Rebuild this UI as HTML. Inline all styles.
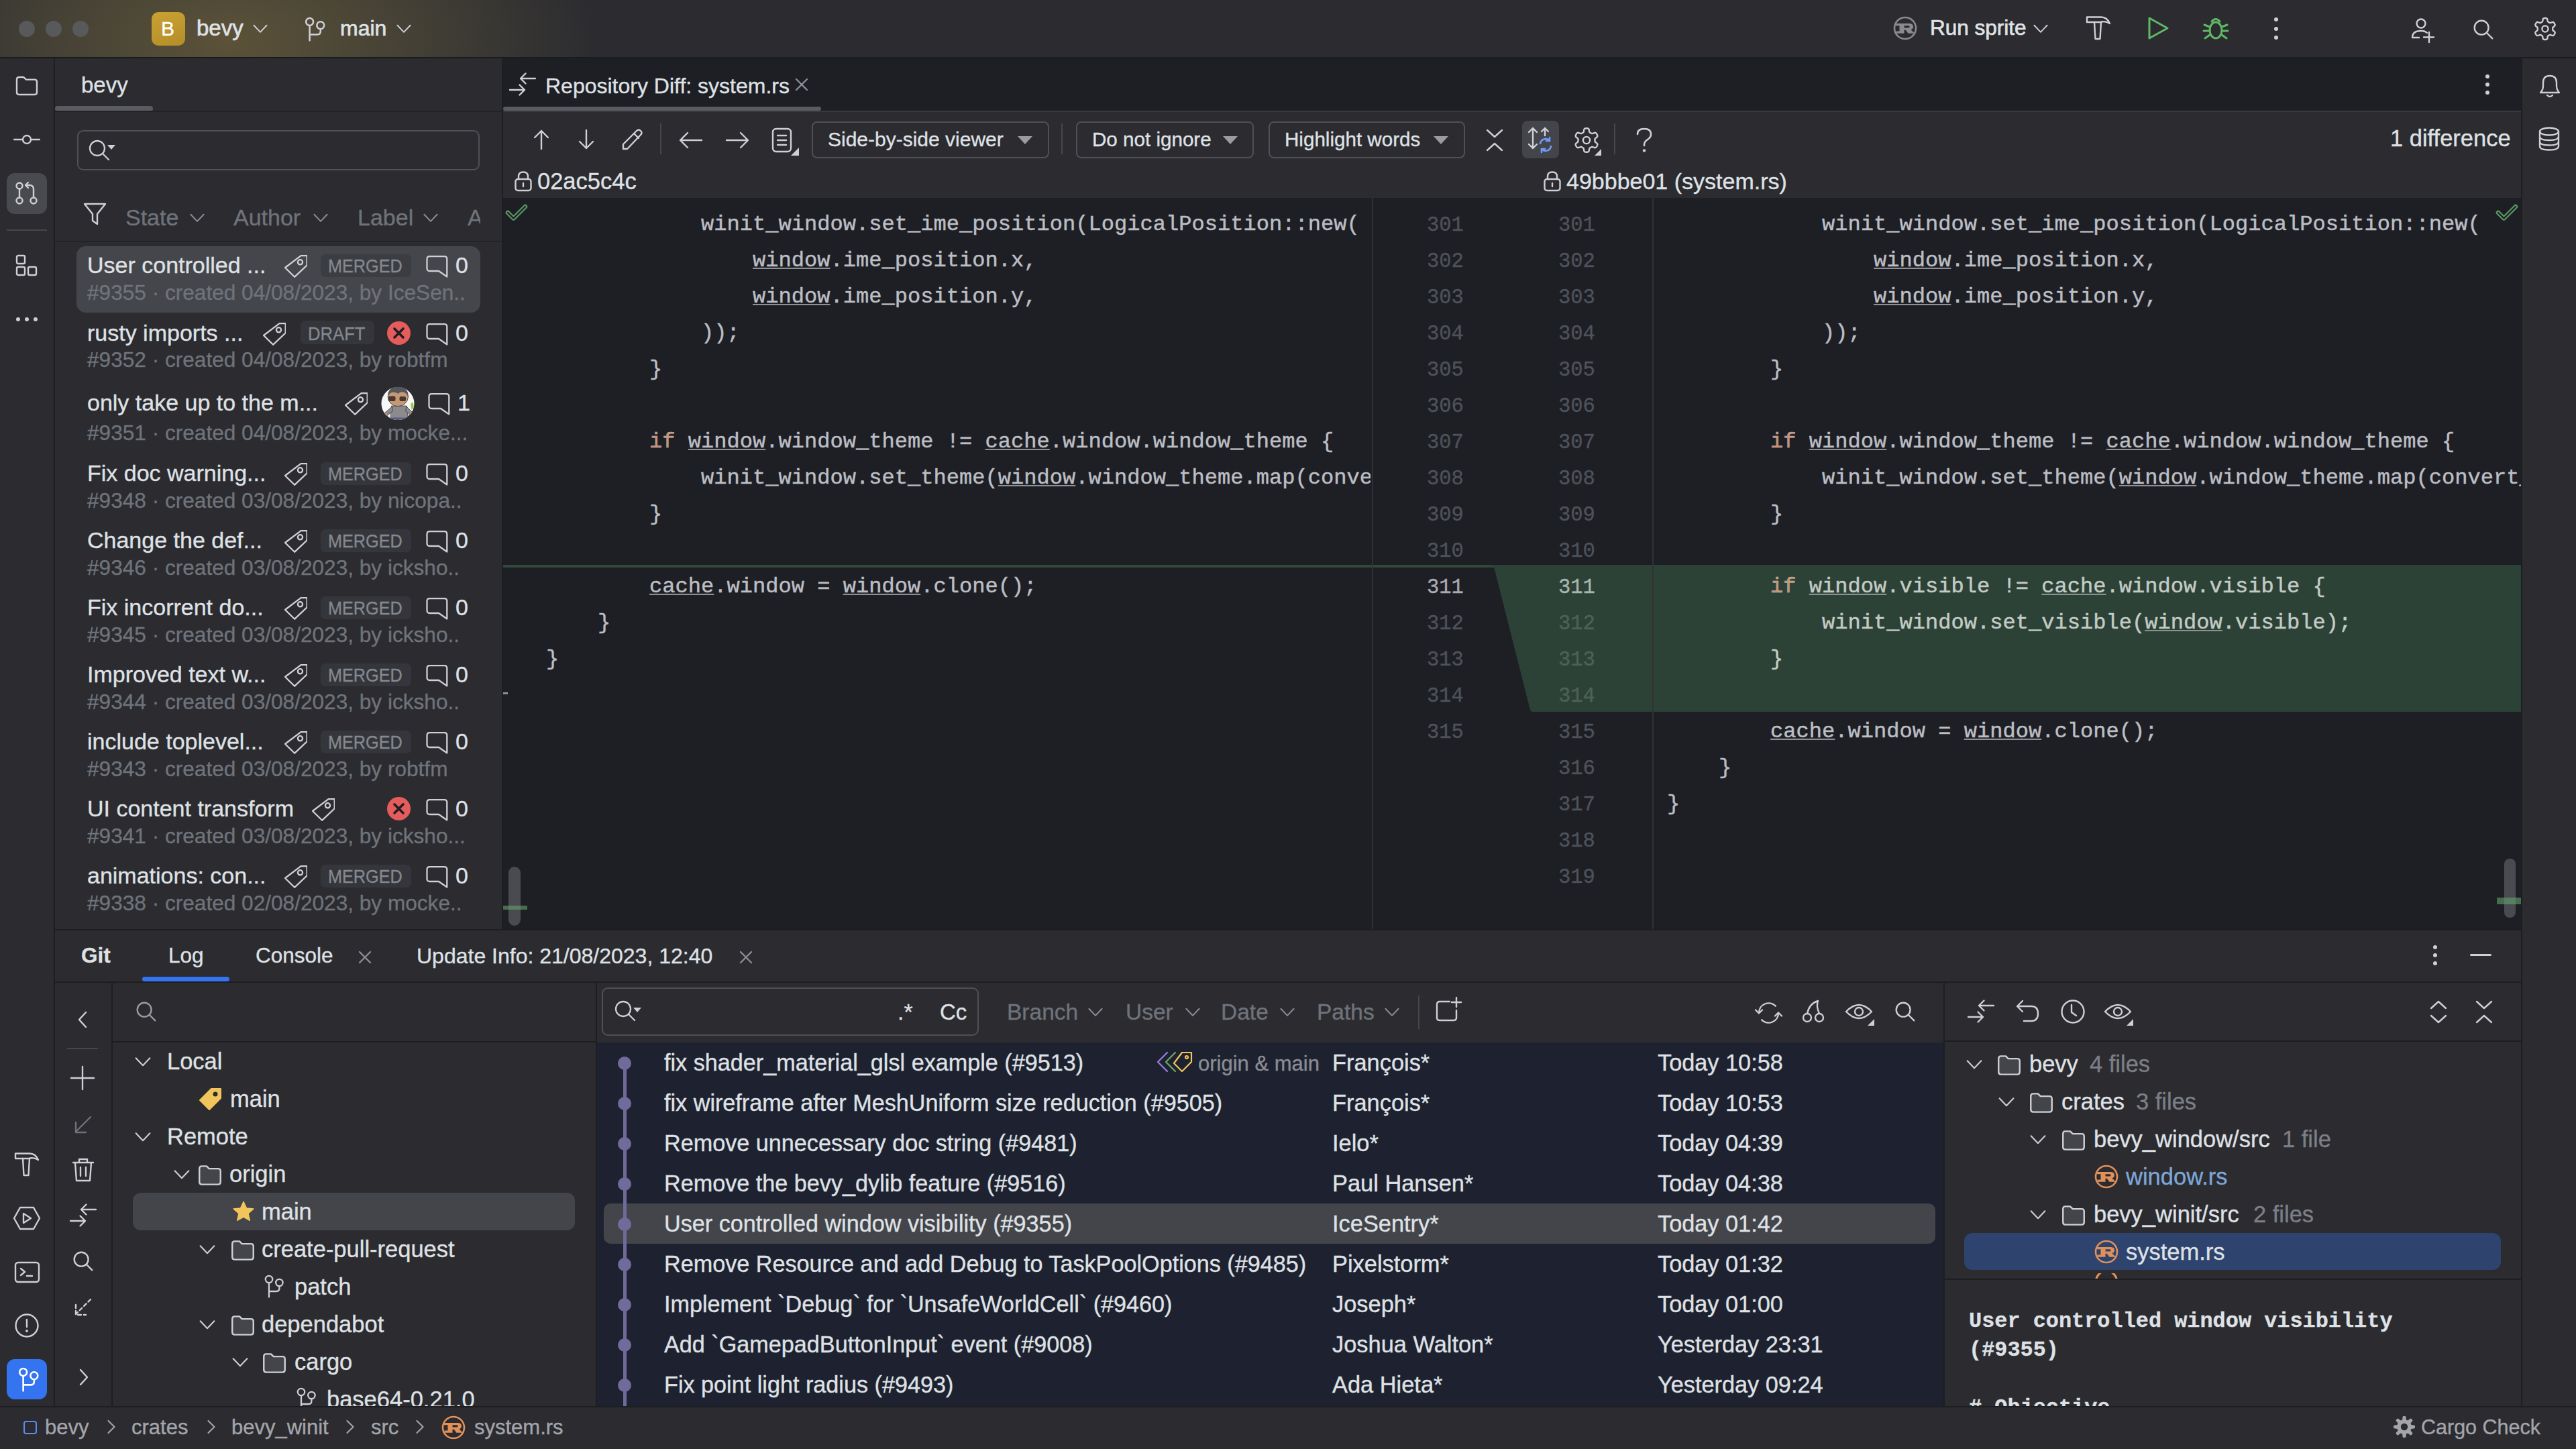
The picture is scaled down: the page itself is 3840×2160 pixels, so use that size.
<!DOCTYPE html><html><head><meta charset="utf-8"><title>RustRover</title>
<style>
html,body{margin:0;padding:0;}
body{width:3840px;height:2160px;overflow:hidden;background:#2b2b30;position:relative;font-family:"Liberation Sans",sans-serif;}
.t{position:absolute;white-space:pre;line-height:1;-webkit-text-stroke-width:0.35px;}
u{text-decoration:underline;text-underline-offset:2px;text-decoration-thickness:2px;text-decoration-color:#8e9096;}
</style>
</head><body>
<div style="position:absolute;left:0px;top:0px;width:3840px;height:86px;background:#2b2b30;border-radius:0px;"></div>
<div style="position:absolute;left:0;top:0;width:3840px;height:86px;background:radial-gradient(ellipse 560px 290px at 340px 60px, rgba(126,110,62,0.58) 0%, rgba(110,100,62,0.38) 48%, rgba(43,43,48,0) 100%);"></div>
<div style="position:absolute;left:0px;top:85px;width:3840px;height:2px;background:#1b1c1f;border-radius:0px;"></div>
<div style="position:absolute;left:28px;top:31px;width:24px;height:24px;background:#58595b;border-radius:12px;"></div>
<div style="position:absolute;left:68px;top:31px;width:24px;height:24px;background:#58595b;border-radius:12px;"></div>
<div style="position:absolute;left:108px;top:31px;width:24px;height:24px;background:#58595b;border-radius:12px;"></div>
<div style="position:absolute;left:226px;top:18px;width:50px;height:50px;background:linear-gradient(160deg,#c9a233,#b58d2a);border-radius:10px;"></div>
<div class="t" style="left:240px;top:27.61px;font-size:30px;color:#ffffff;font-weight:400;font-family:'Liberation Sans', sans-serif;">B</div>
<div class="t" style="left:293px;top:25.07px;font-size:33px;color:#dfe1e5;font-weight:400;font-family:'Liberation Sans', sans-serif;-webkit-text-stroke:0.7px #dfe1e5">bevy</div>
<svg style="position:absolute;left:376px;top:31px;" width="24" height="24" viewBox="0 0 20 20" fill="none" stroke-linecap="round" stroke-linejoin="round"><g stroke="#ced0d6" stroke-width="1.6"><path d="M2 5.6 L10 14 L18 5.6"/></g></svg>
<svg style="position:absolute;left:452px;top:22px;" width="36" height="42" viewBox="-1 -2 34 40" fill="none" stroke-linecap="round" stroke-linejoin="round"><g stroke="#ced0d6" stroke-width="2.4" fill="none"><circle cx="8" cy="8" r="5.2"/><circle cx="23.4" cy="13" r="5.2"/><path d="M8 13.2 V34.5 M8 26 H19 Q23.4 26 23.4 21.6 V18.2"/></g></svg>
<div class="t" style="left:507px;top:25.91px;font-size:32px;color:#dfe1e5;font-weight:400;font-family:'Liberation Sans', sans-serif;-webkit-text-stroke:0.7px #dfe1e5">main</div>
<svg style="position:absolute;left:590px;top:31px;" width="24" height="24" viewBox="0 0 20 20" fill="none" stroke-linecap="round" stroke-linejoin="round"><g stroke="#ced0d6" stroke-width="1.6"><path d="M2 5.6 L10 14 L18 5.6"/></g></svg>
<svg style="position:absolute;left:2822px;top:24px;" width="36" height="36" viewBox="0 0 36 36" fill="none" stroke-linecap="round" stroke-linejoin="round"><circle cx="18" cy="18" r="16" stroke="#8a8b8f" stroke-width="2.6"/><path fill-rule="evenodd" d="M4 11 H24 Q30 11 30 15.8 Q30 19.2 26.5 20.3 L32 25.8 H22.5 L18.8 20.8 H16.5 V25.8 H4.5 V22.6 H9.5 V14.2 H4 Z M16.5 14.2 H23 Q24.6 14.2 24.6 15.7 V16 Q24.6 17.6 23 17.6 H16.5 Z" fill="#8a8b8f"/></svg>
<div class="t" style="left:2877px;top:26.34px;font-size:31.5px;color:#dfe1e5;font-weight:400;font-family:'Liberation Sans', sans-serif;-webkit-text-stroke:0.7px #dfe1e5">Run sprite</div>
<svg style="position:absolute;left:3030px;top:31px;" width="24" height="24" viewBox="0 0 20 20" fill="none" stroke-linecap="round" stroke-linejoin="round"><g stroke="#ced0d6" stroke-width="1.6"><path d="M2 5.6 L10 14 L18 5.6"/></g></svg>
<svg style="position:absolute;left:3108px;top:22px;" width="40" height="40" viewBox="0 0 40 40" fill="none" stroke-linecap="round" stroke-linejoin="round"><g stroke="#ced0d6" stroke-width="2.4"><path d="M3 3.5 H24 Q33 3.5 37 13 Q31 9 24.5 10.5 V11 H3 Z"/><path d="M14 11 L15.5 36 H22.5 L24 11"/></g></svg>
<svg style="position:absolute;left:3199px;top:24px;" width="36" height="36" viewBox="0 0 36 36" fill="none" stroke-linecap="round" stroke-linejoin="round"><path d="M5 3 L32 18 L5 33 Z" stroke="#5fb865" stroke-width="3" fill="none" stroke-linejoin="round"/></svg>
<svg style="position:absolute;left:3282px;top:22px;" width="42" height="40" viewBox="0 0 42 40" fill="none" stroke-linecap="round" stroke-linejoin="round"><g stroke="#5fb865" stroke-width="3"><ellipse cx="21" cy="23" rx="9" ry="12"/><path d="M15 10 Q21 3 27 10"/><path d="M4 15 L12 18 M38 15 L30 18 M3 24 H12 M39 24 H30 M5 35 L12 30 M37 35 L30 30"/></g></svg>
<div style="position:absolute;left:3390px;top:26px;width:6px;height:6px;background:#ced0d6;border-radius:3px;"></div>
<div style="position:absolute;left:3390px;top:40px;width:6px;height:6px;background:#ced0d6;border-radius:3px;"></div>
<div style="position:absolute;left:3390px;top:53px;width:6px;height:6px;background:#ced0d6;border-radius:3px;"></div>
<svg style="position:absolute;left:3593px;top:26px;" width="40" height="40" viewBox="0 0 40 40" fill="none" stroke-linecap="round" stroke-linejoin="round"><g stroke="#ced0d6" stroke-width="2.4"><circle cx="16" cy="9" r="6.5"/><path d="M3 30 Q3 20 16 20 Q22 20 25 23 M3 30 H13 M28 22 V37 M20 29.5 H35"/></g></svg>
<svg style="position:absolute;left:3683px;top:25px;" width="38" height="38" viewBox="0 0 20 20" fill="none" stroke-linecap="round" stroke-linejoin="round"><g stroke="#ced0d6" stroke-width="1.25"><circle cx="8.5" cy="8.5" r="5.5"/><path d="M12.5 12.5 L17 17"/></g></svg>
<svg style="position:absolute;left:3776px;top:25px;" width="36" height="36" viewBox="0 0 36 36" fill="none" stroke-linecap="round" stroke-linejoin="round"><g stroke="#ced0d6" stroke-width="2.40" stroke-linejoin="round"><path d="M29.20 18.00 L29.20 18.29 L29.20 18.59 L29.20 18.88 L29.21 19.18 L29.25 19.48 L29.34 19.80 L29.53 20.14 L29.88 20.53 L30.43 20.98 L31.14 21.52 L31.82 22.09 L32.32 22.65 L32.58 23.16 L32.67 23.63 L32.64 24.07 L32.55 24.48 L32.41 24.87 L32.24 25.26 L32.06 25.63 L31.86 26.00 L31.64 26.36 L31.41 26.71 L31.16 27.04 L30.88 27.36 L30.57 27.65 L30.21 27.89 L29.77 28.05 L29.19 28.07 L28.46 27.92 L27.62 27.62 L26.80 27.27 L26.13 27.03 L25.62 26.92 L25.23 26.93 L24.91 27.00 L24.63 27.12 L24.36 27.26 L24.11 27.40 L23.85 27.55 L23.60 27.70 L23.35 27.85 L23.09 27.99 L22.84 28.14 L22.59 28.30 L22.34 28.49 L22.12 28.72 L21.91 29.06 L21.75 29.55 L21.63 30.26 L21.52 31.14 L21.37 32.02 L21.13 32.73 L20.82 33.21 L20.46 33.52 L20.07 33.71 L19.66 33.84 L19.25 33.91 L18.84 33.96 L18.42 33.99 L18.00 34.00 L17.58 33.99 L17.16 33.96 L16.75 33.91 L16.34 33.84 L15.93 33.71 L15.54 33.52 L15.18 33.21 L14.87 32.73 L14.63 32.02 L14.48 31.14 L14.37 30.26 L14.25 29.55 L14.09 29.06 L13.88 28.72 L13.66 28.49 L13.41 28.30 L13.16 28.14 L12.91 27.99 L12.65 27.85 L12.40 27.70 L12.15 27.55 L11.89 27.40 L11.64 27.26 L11.37 27.12 L11.09 27.00 L10.77 26.93 L10.38 26.92 L9.87 27.03 L9.20 27.27 L8.38 27.62 L7.54 27.92 L6.81 28.07 L6.23 28.05 L5.79 27.89 L5.43 27.65 L5.12 27.36 L4.84 27.04 L4.59 26.71 L4.36 26.36 L4.14 26.00 L3.94 25.63 L3.76 25.26 L3.59 24.87 L3.45 24.48 L3.36 24.07 L3.33 23.63 L3.42 23.16 L3.68 22.65 L4.18 22.09 L4.86 21.52 L5.57 20.98 L6.12 20.53 L6.47 20.14 L6.66 19.80 L6.75 19.48 L6.79 19.18 L6.80 18.88 L6.80 18.59 L6.80 18.29 L6.80 18.00 L6.80 17.71 L6.80 17.41 L6.80 17.12 L6.79 16.82 L6.75 16.52 L6.66 16.20 L6.47 15.86 L6.12 15.47 L5.57 15.02 L4.86 14.48 L4.18 13.91 L3.68 13.35 L3.42 12.84 L3.33 12.37 L3.36 11.93 L3.45 11.52 L3.59 11.13 L3.76 10.74 L3.94 10.37 L4.14 10.00 L4.36 9.64 L4.59 9.29 L4.84 8.96 L5.12 8.64 L5.43 8.35 L5.79 8.11 L6.23 7.95 L6.81 7.93 L7.54 8.08 L8.38 8.38 L9.20 8.73 L9.87 8.97 L10.38 9.08 L10.77 9.07 L11.09 9.00 L11.37 8.88 L11.64 8.74 L11.89 8.60 L12.15 8.45 L12.40 8.30 L12.65 8.15 L12.91 8.01 L13.16 7.86 L13.41 7.70 L13.66 7.51 L13.88 7.28 L14.09 6.94 L14.25 6.45 L14.37 5.74 L14.48 4.86 L14.63 3.98 L14.87 3.27 L15.18 2.79 L15.54 2.48 L15.93 2.29 L16.34 2.16 L16.75 2.09 L17.16 2.04 L17.58 2.01 L18.00 2.00 L18.42 2.01 L18.84 2.04 L19.25 2.09 L19.66 2.16 L20.07 2.29 L20.46 2.48 L20.82 2.79 L21.13 3.27 L21.37 3.98 L21.52 4.86 L21.63 5.74 L21.75 6.45 L21.91 6.94 L22.12 7.28 L22.34 7.51 L22.59 7.70 L22.84 7.86 L23.09 8.01 L23.35 8.15 L23.60 8.30 L23.85 8.45 L24.11 8.60 L24.36 8.74 L24.63 8.88 L24.91 9.00 L25.23 9.07 L25.62 9.08 L26.13 8.97 L26.80 8.73 L27.62 8.38 L28.46 8.08 L29.19 7.93 L29.77 7.95 L30.21 8.11 L30.57 8.35 L30.88 8.64 L31.16 8.96 L31.41 9.29 L31.64 9.64 L31.86 10.00 L32.06 10.37 L32.24 10.74 L32.41 11.13 L32.55 11.52 L32.64 11.93 L32.67 12.37 L32.58 12.84 L32.32 13.35 L31.82 13.91 L31.14 14.48 L30.43 15.02 L29.88 15.47 L29.53 15.86 L29.34 16.20 L29.25 16.52 L29.21 16.82 L29.20 17.12 L29.20 17.41 L29.20 17.71 Z"/><circle cx="18" cy="18" r="4.6"/></g></svg>
<div style="position:absolute;left:0px;top:87px;width:80px;height:2010px;background:#2b2b30;border-radius:0px;"></div>
<div style="position:absolute;left:80px;top:87px;width:2px;height:2010px;background:#1d1e22;border-radius:0px;"></div>
<svg style="position:absolute;left:20px;top:108px;" width="40" height="40" viewBox="0 0 20 20" fill="none" stroke-linecap="round" stroke-linejoin="round"><g stroke="#ced0d6" stroke-width="1.2"><path d="M2.5 5.2 Q2.5 3.5 4.2 3.5 H7.6 L9.4 5.3 H15.8 Q17.5 5.3 17.5 7 V14.8 Q17.5 16.5 15.8 16.5 H4.2 Q2.5 16.5 2.5 14.8 Z"/></g></svg>
<svg style="position:absolute;left:20px;top:190px;" width="40" height="36" viewBox="0 0 40 36" fill="none" stroke-linecap="round" stroke-linejoin="round"><g stroke="#ced0d6" stroke-width="2.4"><circle cx="20" cy="18" r="6"/><path d="M1 18 H14 M26 18 H39"/></g></svg>
<div style="position:absolute;left:10px;top:258px;width:60px;height:61px;background:#494a4f;border-radius:12px;"></div>
<svg style="position:absolute;left:20px;top:268px;" width="40" height="40" viewBox="0 0 40 40" fill="none" stroke-linecap="round" stroke-linejoin="round"><g stroke="#ced0d6" stroke-width="2.4"><circle cx="9" cy="9" r="4.5"/><circle cx="9" cy="31" r="4.5"/><circle cx="30" cy="31" r="4.5"/><path d="M9 13.5 V26.5 M30 26.5 V14 Q30 8 24 8 H18 M22 4 L18 8 L22 12"/></g></svg>
<div style="position:absolute;left:10px;top:342px;width:60px;height:2px;background:#45474c;border-radius:0px;"></div>
<svg style="position:absolute;left:22px;top:378px;" width="36" height="36" viewBox="0 0 36 36" fill="none" stroke-linecap="round" stroke-linejoin="round"><g stroke="#ced0d6" stroke-width="2.4"><rect x="3" y="3" width="12" height="12" rx="2"/><rect x="3" y="20" width="12" height="12" rx="2"/><rect x="20" y="20" width="12" height="12" rx="2"/></g></svg>
<div style="position:absolute;left:24px;top:473px;width:6px;height:6px;background:#ced0d6;border-radius:3px;"></div>
<div style="position:absolute;left:37px;top:473px;width:6px;height:6px;background:#ced0d6;border-radius:3px;"></div>
<div style="position:absolute;left:50px;top:473px;width:6px;height:6px;background:#ced0d6;border-radius:3px;"></div>
<svg style="position:absolute;left:20px;top:1716px;" width="40" height="40" viewBox="0 0 40 40" fill="none" stroke-linecap="round" stroke-linejoin="round"><g stroke="#ced0d6" stroke-width="2.4"><path d="M3 3.5 H24 Q33 3.5 37 13 Q31 9 24.5 10.5 V11 H3 Z"/><path d="M14 11 L15.5 36 H22.5 L24 11"/></g></svg>
<svg style="position:absolute;left:19px;top:1797px;" width="42" height="40" viewBox="0 0 42 40" fill="none" stroke-linecap="round" stroke-linejoin="round"><g stroke="#ced0d6" stroke-width="2.4"><path d="M11 3 H31 L40 19 L31 35 H11 L2 19 Z"/><path d="M16 12 L27 19 L16 26 Z"/></g></svg>
<svg style="position:absolute;left:21px;top:1879px;" width="40" height="36" viewBox="0 0 40 36" fill="none" stroke-linecap="round" stroke-linejoin="round"><g stroke="#ced0d6" stroke-width="2.4"><rect x="2" y="3" width="35" height="29" rx="4"/><path d="M10 12 L16 17 L10 22 M19 23 H27"/></g></svg>
<svg style="position:absolute;left:21px;top:1957px;" width="40" height="40" viewBox="0 0 40 40" fill="none" stroke-linecap="round" stroke-linejoin="round"><g stroke="#ced0d6" stroke-width="2.4"><circle cx="19" cy="19" r="16.5"/><path d="M19 10 V21"/></g><circle cx="19" cy="27" r="1.9" fill="#ced0d6"/></svg>
<div style="position:absolute;left:10px;top:2026px;width:60px;height:60px;background:#3574f0;border-radius:12px;"></div>
<svg style="position:absolute;left:22px;top:2036px;" width="40" height="40" viewBox="-3 -1 36 38" fill="none" stroke-linecap="round" stroke-linejoin="round"><g stroke="#ffffff" stroke-width="2.5" fill="none"><circle cx="8" cy="8" r="5.2"/><circle cx="23.4" cy="13" r="5.2"/><path d="M8 13.2 V34.5 M8 26 H19 Q23.4 26 23.4 21.6 V18.2"/></g></svg>
<div style="position:absolute;left:3760px;top:87px;width:80px;height:2010px;background:#2b2b30;border-radius:0px;"></div>
<div style="position:absolute;left:3758px;top:87px;width:2px;height:2010px;background:#1d1e22;border-radius:0px;"></div>
<svg style="position:absolute;left:3782px;top:108px;" width="38" height="42" viewBox="0 0 38 42" fill="none" stroke-linecap="round" stroke-linejoin="round"><g stroke="#ced0d6" stroke-width="2.4"><path d="M5 30 Q9 26 9 20 V15 Q9 5 19 5 Q29 5 29 15 V20 Q29 26 33 30 Z"/><path d="M15 34 Q19 38 23 34"/></g></svg>
<svg style="position:absolute;left:3783px;top:188px;" width="36" height="40" viewBox="0 0 36 40" fill="none" stroke-linecap="round" stroke-linejoin="round"><g stroke="#ced0d6" stroke-width="2.4"><ellipse cx="17" cy="8" rx="14" ry="5.5"/><path d="M3 8 V30 Q3 35.5 17 35.5 Q31 35.5 31 30 V8 M3 15.5 Q3 21 17 21 Q31 21 31 15.5 M3 23 Q3 28.5 17 28.5 Q31 28.5 31 23"/></g></svg>
<div style="position:absolute;left:82px;top:87px;width:666px;height:1298px;background:#2b2b30;border-radius:0px;"></div>
<div style="position:absolute;left:748px;top:87px;width:2px;height:1298px;background:#1d1e22;border-radius:0px;"></div>
<div class="t" style="left:121px;top:110.07px;font-size:33px;color:#dfe1e5;font-weight:400;font-family:'Liberation Sans', sans-serif;">bevy</div>
<div style="position:absolute;left:82px;top:158px;width:146px;height:8px;background:#5a5b61;border-radius:4px;"></div>
<div style="position:absolute;left:82px;top:165px;width:666px;height:2px;background:#222327;border-radius:0px;"></div>
<div style="position:absolute;left:115px;top:194px;width:596px;height:56px;border:2px solid #4f5157;background:transparent;border-radius:9px;"></div>
<svg style="position:absolute;left:128px;top:204px;" width="40" height="40" viewBox="0 0 20 20" fill="none" stroke-linecap="round" stroke-linejoin="round"><g stroke="#ced0d6" stroke-width="1.15"><circle cx="8.5" cy="8.5" r="5.5"/><path d="M12.5 12.5 L17 17"/></g></svg>
<svg style="position:absolute;left:158px;top:214px;" width="16" height="12" viewBox="0 0 16 12" fill="none" stroke-linecap="round" stroke-linejoin="round"><path d="M2 2 H14 L8 9 Z" fill="#ced0d6"/></svg>
<svg style="position:absolute;left:122px;top:300px;" width="40" height="38" viewBox="0 0 40 38" fill="none" stroke-linecap="round" stroke-linejoin="round"><path d="M4 4 H35 L23 19 V34 L16 29 V19 Z" stroke="#ced0d6" stroke-width="2.4" stroke-linejoin="round"/></svg>
<div class="t" style="left:187px;top:307.22px;font-size:34px;color:#6f737a;font-weight:400;font-family:'Liberation Sans', sans-serif;">State</div>
<svg style="position:absolute;left:282px;top:313px;" width="24" height="24" viewBox="0 0 20 20" fill="none" stroke-linecap="round" stroke-linejoin="round"><g stroke="#8c8f96" stroke-width="1.6"><path d="M2 5.6 L10 14 L18 5.6"/></g></svg>
<div class="t" style="left:348px;top:307.22px;font-size:34px;color:#6f737a;font-weight:400;font-family:'Liberation Sans', sans-serif;">Author</div>
<svg style="position:absolute;left:466px;top:313px;" width="24" height="24" viewBox="0 0 20 20" fill="none" stroke-linecap="round" stroke-linejoin="round"><g stroke="#8c8f96" stroke-width="1.6"><path d="M2 5.6 L10 14 L18 5.6"/></g></svg>
<div class="t" style="left:533px;top:307.22px;font-size:34px;color:#6f737a;font-weight:400;font-family:'Liberation Sans', sans-serif;">Label</div>
<svg style="position:absolute;left:630px;top:313px;" width="24" height="24" viewBox="0 0 20 20" fill="none" stroke-linecap="round" stroke-linejoin="round"><g stroke="#8c8f96" stroke-width="1.6"><path d="M2 5.6 L10 14 L18 5.6"/></g></svg>
<div style="position:absolute;left:690px;top:300px;width:26px;height:50px;overflow:hidden">
<div class="t" style="left:7px;top:7.22px;font-size:34px;color:#6f737a;font-weight:400;font-family:'Liberation Sans', sans-serif;">A</div>
</div>
<div style="position:absolute;left:82px;top:359px;width:666px;height:2px;background:#222327;border-radius:0px;"></div>
<div style="position:absolute;left:114px;top:367px;width:602px;height:99px;background:#45464b;border-radius:14px;"></div>
<div class="t" style="left:130px;top:378.22px;font-size:34px;color:#dfe1e5;font-weight:400;font-family:'Liberation Sans', sans-serif;">User controlled ...</div>
<svg style="position:absolute;left:424px;top:380px;" width="34" height="34" viewBox="0 0 34 34" fill="none" stroke-linecap="round" stroke-linejoin="round"><g stroke="#ced0d6" stroke-width="2.3"><path d="M24.6 1.2 H33.7 V15.3 L15.1 32.8 L1 19 Z"/><circle cx="23.5" cy="10.8" r="3.6"/></g></svg>
<div style="position:absolute;left:478px;top:379px;width:135px;height:34px;background:#3c3d42;border-radius:7px;"></div>
<div class="t" style="left:489px;top:381.87px;font-size:28.5px;color:#85888e;font-weight:400;font-family:'Liberation Sans', sans-serif;transform:scaleX(0.885);transform-origin:0 0">MERGED</div>
<svg style="position:absolute;left:635px;top:380px;" width="34" height="34" viewBox="0 0 34 34" fill="none" stroke-linecap="round" stroke-linejoin="round"><g stroke="#ced0d6" stroke-width="2.3"><path d="M5.5 2.2 H27.3 Q31.3 2.2 31.3 6.2 V32.5 L19 24 H5.5 Q1.5 24 1.5 20 V6.2 Q1.5 2.2 5.5 2.2 Z"/></g></svg>
<div class="t" style="left:679px;top:378.22px;font-size:34px;color:#dfe1e5;font-weight:400;font-family:'Liberation Sans', sans-serif;">0</div>
<div class="t" style="left:130px;top:421.25px;font-size:31.6px;color:#6f737a;font-weight:400;font-family:'Liberation Sans', sans-serif;">#9355 · created 04/08/2023, by IceSen..</div>
<div class="t" style="left:130px;top:479.22px;font-size:34px;color:#dfe1e5;font-weight:400;font-family:'Liberation Sans', sans-serif;">rusty imports ...</div>
<svg style="position:absolute;left:392px;top:481px;" width="34" height="34" viewBox="0 0 34 34" fill="none" stroke-linecap="round" stroke-linejoin="round"><g stroke="#ced0d6" stroke-width="2.3"><path d="M24.6 1.2 H33.7 V15.3 L15.1 32.8 L1 19 Z"/><circle cx="23.5" cy="10.8" r="3.6"/></g></svg>
<div style="position:absolute;left:448px;top:478px;width:110px;height:35px;background:#35363b;border-radius:7px;"></div>
<div class="t" style="left:459px;top:482.87px;font-size:28.5px;color:#85888e;font-weight:400;font-family:'Liberation Sans', sans-serif;transform:scaleX(0.9);transform-origin:0 0">DRAFT</div>
<svg style="position:absolute;left:577px;top:479px;" width="35" height="35" viewBox="0 0 35 35" fill="none" stroke-linecap="round" stroke-linejoin="round"><circle cx="17.5" cy="17.5" r="17.5" fill="#e55c5c"/><path d="M11 11 L24 24 M24 11 L11 24" stroke="#1e1f22" stroke-width="3.6" stroke-linecap="round"/></svg>
<svg style="position:absolute;left:635px;top:481px;" width="34" height="34" viewBox="0 0 34 34" fill="none" stroke-linecap="round" stroke-linejoin="round"><g stroke="#ced0d6" stroke-width="2.3"><path d="M5.5 2.2 H27.3 Q31.3 2.2 31.3 6.2 V32.5 L19 24 H5.5 Q1.5 24 1.5 20 V6.2 Q1.5 2.2 5.5 2.2 Z"/></g></svg>
<div class="t" style="left:679px;top:479.22px;font-size:34px;color:#dfe1e5;font-weight:400;font-family:'Liberation Sans', sans-serif;">0</div>
<div class="t" style="left:130px;top:521.25px;font-size:31.6px;color:#6f737a;font-weight:400;font-family:'Liberation Sans', sans-serif;">#9352 · created 04/08/2023, by robtfm</div>
<div class="t" style="left:130px;top:583.22px;font-size:34px;color:#dfe1e5;font-weight:400;font-family:'Liberation Sans', sans-serif;">only take up to the m...</div>
<svg style="position:absolute;left:514px;top:585px;" width="34" height="34" viewBox="0 0 34 34" fill="none" stroke-linecap="round" stroke-linejoin="round"><g stroke="#ced0d6" stroke-width="2.3"><path d="M24.6 1.2 H33.7 V15.3 L15.1 32.8 L1 19 Z"/><circle cx="23.5" cy="10.8" r="3.6"/></g></svg>
<svg style="position:absolute;left:568px;top:576px;" width="50" height="50" viewBox="0 0 50 50" fill="none" stroke-linecap="round" stroke-linejoin="round"><defs><clipPath id="avc"><circle cx="25" cy="25" r="25"/></clipPath></defs><circle cx="25" cy="25.5" r="24.5" fill="#f7f7f7"/><g clip-path="url(#avc)"><path d="M16 29 H38 L41 51 H14 Z" fill="#8b8b8d" stroke="#3a3a3a" stroke-width="0.8"/><path d="M16.5 30 L5 40 L8.5 44 L17 37 Z" fill="#8b8b8d" stroke="#3a3a3a" stroke-width="0.8"/><path d="M38 30 L47 39 L44 43 L37 37 Z" fill="#8b8b8d" stroke="#3a3a3a" stroke-width="0.8"/><circle cx="6.5" cy="42" r="2.6" fill="#c49a74"/><circle cx="45.5" cy="41" r="2.6" fill="#c49a74"/><rect x="15" y="46.5" width="24" height="3.5" fill="#5b5b85"/><path d="M44 26 L47.5 23 L49 31 L45.5 35 Z" fill="#9acb50"/></g><ellipse cx="25.3" cy="15.5" rx="15.2" ry="14" fill="#c49a74" stroke="#3a3a3a" stroke-width="0.8"/><path d="M10.2 15.5 Q9.5 0.8 25.3 0.8 Q41 0.8 40.5 15 Q38 9.5 33 8.5 Q28 7.8 25.5 11 Q22 8 17 8.8 Q12 10 10.2 15.5 Z" fill="#56565c"/><rect x="11" y="14.5" width="10.5" height="7.5" rx="2.2" fill="#4a3530"/><rect x="27.5" y="15" width="9.5" height="7" rx="2.2" fill="#4a3530"/></svg>
<svg style="position:absolute;left:638px;top:585px;" width="34" height="34" viewBox="0 0 34 34" fill="none" stroke-linecap="round" stroke-linejoin="round"><g stroke="#ced0d6" stroke-width="2.3"><path d="M5.5 2.2 H27.3 Q31.3 2.2 31.3 6.2 V32.5 L19 24 H5.5 Q1.5 24 1.5 20 V6.2 Q1.5 2.2 5.5 2.2 Z"/></g></svg>
<div class="t" style="left:682px;top:583.22px;font-size:34px;color:#dfe1e5;font-weight:400;font-family:'Liberation Sans', sans-serif;">1</div>
<div class="t" style="left:130px;top:630.25px;font-size:31.6px;color:#6f737a;font-weight:400;font-family:'Liberation Sans', sans-serif;">#9351 · created 04/08/2023, by mocke...</div>
<div class="t" style="left:130px;top:688.22px;font-size:34px;color:#dfe1e5;font-weight:400;font-family:'Liberation Sans', sans-serif;">Fix doc warning...</div>
<svg style="position:absolute;left:424px;top:690px;" width="34" height="34" viewBox="0 0 34 34" fill="none" stroke-linecap="round" stroke-linejoin="round"><g stroke="#ced0d6" stroke-width="2.3"><path d="M24.6 1.2 H33.7 V15.3 L15.1 32.8 L1 19 Z"/><circle cx="23.5" cy="10.8" r="3.6"/></g></svg>
<div style="position:absolute;left:478px;top:689px;width:135px;height:34px;background:#35363b;border-radius:7px;"></div>
<div class="t" style="left:489px;top:691.87px;font-size:28.5px;color:#85888e;font-weight:400;font-family:'Liberation Sans', sans-serif;transform:scaleX(0.885);transform-origin:0 0">MERGED</div>
<svg style="position:absolute;left:635px;top:690px;" width="34" height="34" viewBox="0 0 34 34" fill="none" stroke-linecap="round" stroke-linejoin="round"><g stroke="#ced0d6" stroke-width="2.3"><path d="M5.5 2.2 H27.3 Q31.3 2.2 31.3 6.2 V32.5 L19 24 H5.5 Q1.5 24 1.5 20 V6.2 Q1.5 2.2 5.5 2.2 Z"/></g></svg>
<div class="t" style="left:679px;top:688.22px;font-size:34px;color:#dfe1e5;font-weight:400;font-family:'Liberation Sans', sans-serif;">0</div>
<div class="t" style="left:130px;top:731.25px;font-size:31.6px;color:#6f737a;font-weight:400;font-family:'Liberation Sans', sans-serif;">#9348 · created 03/08/2023, by nicopa..</div>
<div class="t" style="left:130px;top:788.22px;font-size:34px;color:#dfe1e5;font-weight:400;font-family:'Liberation Sans', sans-serif;">Change the def...</div>
<svg style="position:absolute;left:424px;top:790px;" width="34" height="34" viewBox="0 0 34 34" fill="none" stroke-linecap="round" stroke-linejoin="round"><g stroke="#ced0d6" stroke-width="2.3"><path d="M24.6 1.2 H33.7 V15.3 L15.1 32.8 L1 19 Z"/><circle cx="23.5" cy="10.8" r="3.6"/></g></svg>
<div style="position:absolute;left:478px;top:789px;width:135px;height:34px;background:#35363b;border-radius:7px;"></div>
<div class="t" style="left:489px;top:791.87px;font-size:28.5px;color:#85888e;font-weight:400;font-family:'Liberation Sans', sans-serif;transform:scaleX(0.885);transform-origin:0 0">MERGED</div>
<svg style="position:absolute;left:635px;top:790px;" width="34" height="34" viewBox="0 0 34 34" fill="none" stroke-linecap="round" stroke-linejoin="round"><g stroke="#ced0d6" stroke-width="2.3"><path d="M5.5 2.2 H27.3 Q31.3 2.2 31.3 6.2 V32.5 L19 24 H5.5 Q1.5 24 1.5 20 V6.2 Q1.5 2.2 5.5 2.2 Z"/></g></svg>
<div class="t" style="left:679px;top:788.22px;font-size:34px;color:#dfe1e5;font-weight:400;font-family:'Liberation Sans', sans-serif;">0</div>
<div class="t" style="left:130px;top:831.25px;font-size:31.6px;color:#6f737a;font-weight:400;font-family:'Liberation Sans', sans-serif;">#9346 · created 03/08/2023, by icksho..</div>
<div class="t" style="left:130px;top:888.22px;font-size:34px;color:#dfe1e5;font-weight:400;font-family:'Liberation Sans', sans-serif;">Fix incorrent do...</div>
<svg style="position:absolute;left:424px;top:890px;" width="34" height="34" viewBox="0 0 34 34" fill="none" stroke-linecap="round" stroke-linejoin="round"><g stroke="#ced0d6" stroke-width="2.3"><path d="M24.6 1.2 H33.7 V15.3 L15.1 32.8 L1 19 Z"/><circle cx="23.5" cy="10.8" r="3.6"/></g></svg>
<div style="position:absolute;left:478px;top:889px;width:135px;height:34px;background:#35363b;border-radius:7px;"></div>
<div class="t" style="left:489px;top:891.87px;font-size:28.5px;color:#85888e;font-weight:400;font-family:'Liberation Sans', sans-serif;transform:scaleX(0.885);transform-origin:0 0">MERGED</div>
<svg style="position:absolute;left:635px;top:890px;" width="34" height="34" viewBox="0 0 34 34" fill="none" stroke-linecap="round" stroke-linejoin="round"><g stroke="#ced0d6" stroke-width="2.3"><path d="M5.5 2.2 H27.3 Q31.3 2.2 31.3 6.2 V32.5 L19 24 H5.5 Q1.5 24 1.5 20 V6.2 Q1.5 2.2 5.5 2.2 Z"/></g></svg>
<div class="t" style="left:679px;top:888.22px;font-size:34px;color:#dfe1e5;font-weight:400;font-family:'Liberation Sans', sans-serif;">0</div>
<div class="t" style="left:130px;top:931.25px;font-size:31.6px;color:#6f737a;font-weight:400;font-family:'Liberation Sans', sans-serif;">#9345 · created 03/08/2023, by icksho..</div>
<div class="t" style="left:130px;top:988.22px;font-size:34px;color:#dfe1e5;font-weight:400;font-family:'Liberation Sans', sans-serif;">Improved text w...</div>
<svg style="position:absolute;left:424px;top:990px;" width="34" height="34" viewBox="0 0 34 34" fill="none" stroke-linecap="round" stroke-linejoin="round"><g stroke="#ced0d6" stroke-width="2.3"><path d="M24.6 1.2 H33.7 V15.3 L15.1 32.8 L1 19 Z"/><circle cx="23.5" cy="10.8" r="3.6"/></g></svg>
<div style="position:absolute;left:478px;top:989px;width:135px;height:34px;background:#35363b;border-radius:7px;"></div>
<div class="t" style="left:489px;top:991.87px;font-size:28.5px;color:#85888e;font-weight:400;font-family:'Liberation Sans', sans-serif;transform:scaleX(0.885);transform-origin:0 0">MERGED</div>
<svg style="position:absolute;left:635px;top:990px;" width="34" height="34" viewBox="0 0 34 34" fill="none" stroke-linecap="round" stroke-linejoin="round"><g stroke="#ced0d6" stroke-width="2.3"><path d="M5.5 2.2 H27.3 Q31.3 2.2 31.3 6.2 V32.5 L19 24 H5.5 Q1.5 24 1.5 20 V6.2 Q1.5 2.2 5.5 2.2 Z"/></g></svg>
<div class="t" style="left:679px;top:988.22px;font-size:34px;color:#dfe1e5;font-weight:400;font-family:'Liberation Sans', sans-serif;">0</div>
<div class="t" style="left:130px;top:1031.25px;font-size:31.6px;color:#6f737a;font-weight:400;font-family:'Liberation Sans', sans-serif;">#9344 · created 03/08/2023, by icksho..</div>
<div class="t" style="left:130px;top:1088.22px;font-size:34px;color:#dfe1e5;font-weight:400;font-family:'Liberation Sans', sans-serif;">include toplevel...</div>
<svg style="position:absolute;left:424px;top:1090px;" width="34" height="34" viewBox="0 0 34 34" fill="none" stroke-linecap="round" stroke-linejoin="round"><g stroke="#ced0d6" stroke-width="2.3"><path d="M24.6 1.2 H33.7 V15.3 L15.1 32.8 L1 19 Z"/><circle cx="23.5" cy="10.8" r="3.6"/></g></svg>
<div style="position:absolute;left:478px;top:1089px;width:135px;height:34px;background:#35363b;border-radius:7px;"></div>
<div class="t" style="left:489px;top:1091.87px;font-size:28.5px;color:#85888e;font-weight:400;font-family:'Liberation Sans', sans-serif;transform:scaleX(0.885);transform-origin:0 0">MERGED</div>
<svg style="position:absolute;left:635px;top:1090px;" width="34" height="34" viewBox="0 0 34 34" fill="none" stroke-linecap="round" stroke-linejoin="round"><g stroke="#ced0d6" stroke-width="2.3"><path d="M5.5 2.2 H27.3 Q31.3 2.2 31.3 6.2 V32.5 L19 24 H5.5 Q1.5 24 1.5 20 V6.2 Q1.5 2.2 5.5 2.2 Z"/></g></svg>
<div class="t" style="left:679px;top:1088.22px;font-size:34px;color:#dfe1e5;font-weight:400;font-family:'Liberation Sans', sans-serif;">0</div>
<div class="t" style="left:130px;top:1131.25px;font-size:31.6px;color:#6f737a;font-weight:400;font-family:'Liberation Sans', sans-serif;">#9343 · created 03/08/2023, by robtfm</div>
<div class="t" style="left:130px;top:1188.22px;font-size:34px;color:#dfe1e5;font-weight:400;font-family:'Liberation Sans', sans-serif;">UI content transform</div>
<svg style="position:absolute;left:465px;top:1190px;" width="34" height="34" viewBox="0 0 34 34" fill="none" stroke-linecap="round" stroke-linejoin="round"><g stroke="#ced0d6" stroke-width="2.3"><path d="M24.6 1.2 H33.7 V15.3 L15.1 32.8 L1 19 Z"/><circle cx="23.5" cy="10.8" r="3.6"/></g></svg>
<svg style="position:absolute;left:577px;top:1188px;" width="35" height="35" viewBox="0 0 35 35" fill="none" stroke-linecap="round" stroke-linejoin="round"><circle cx="17.5" cy="17.5" r="17.5" fill="#e55c5c"/><path d="M11 11 L24 24 M24 11 L11 24" stroke="#1e1f22" stroke-width="3.6" stroke-linecap="round"/></svg>
<svg style="position:absolute;left:635px;top:1190px;" width="34" height="34" viewBox="0 0 34 34" fill="none" stroke-linecap="round" stroke-linejoin="round"><g stroke="#ced0d6" stroke-width="2.3"><path d="M5.5 2.2 H27.3 Q31.3 2.2 31.3 6.2 V32.5 L19 24 H5.5 Q1.5 24 1.5 20 V6.2 Q1.5 2.2 5.5 2.2 Z"/></g></svg>
<div class="t" style="left:679px;top:1188.22px;font-size:34px;color:#dfe1e5;font-weight:400;font-family:'Liberation Sans', sans-serif;">0</div>
<div class="t" style="left:130px;top:1231.25px;font-size:31.6px;color:#6f737a;font-weight:400;font-family:'Liberation Sans', sans-serif;">#9341 · created 03/08/2023, by icksho...</div>
<div class="t" style="left:130px;top:1288.22px;font-size:34px;color:#dfe1e5;font-weight:400;font-family:'Liberation Sans', sans-serif;">animations: con...</div>
<svg style="position:absolute;left:424px;top:1290px;" width="34" height="34" viewBox="0 0 34 34" fill="none" stroke-linecap="round" stroke-linejoin="round"><g stroke="#ced0d6" stroke-width="2.3"><path d="M24.6 1.2 H33.7 V15.3 L15.1 32.8 L1 19 Z"/><circle cx="23.5" cy="10.8" r="3.6"/></g></svg>
<div style="position:absolute;left:478px;top:1289px;width:135px;height:34px;background:#35363b;border-radius:7px;"></div>
<div class="t" style="left:489px;top:1291.87px;font-size:28.5px;color:#85888e;font-weight:400;font-family:'Liberation Sans', sans-serif;transform:scaleX(0.885);transform-origin:0 0">MERGED</div>
<svg style="position:absolute;left:635px;top:1290px;" width="34" height="34" viewBox="0 0 34 34" fill="none" stroke-linecap="round" stroke-linejoin="round"><g stroke="#ced0d6" stroke-width="2.3"><path d="M5.5 2.2 H27.3 Q31.3 2.2 31.3 6.2 V32.5 L19 24 H5.5 Q1.5 24 1.5 20 V6.2 Q1.5 2.2 5.5 2.2 Z"/></g></svg>
<div class="t" style="left:679px;top:1288.22px;font-size:34px;color:#dfe1e5;font-weight:400;font-family:'Liberation Sans', sans-serif;">0</div>
<div class="t" style="left:130px;top:1331.25px;font-size:31.6px;color:#6f737a;font-weight:400;font-family:'Liberation Sans', sans-serif;">#9338 · created 02/08/2023, by mocke..</div>
<div style="position:absolute;left:750px;top:87px;width:3008px;height:78px;background:#1e1f24;border-radius:0px;"></div>
<svg style="position:absolute;left:758px;top:106px;" width="42" height="40" viewBox="0 0 42 40" fill="none" stroke-linecap="round" stroke-linejoin="round"><g stroke="#ced0d6" stroke-width="2.4"><path d="M18 11 H40 M25.5 3.5 L18 11 L25.5 18.5"/><path d="M2 28 H24 M16.5 20.5 L24 28 L16.5 35.5"/></g></svg>
<div class="t" style="left:813px;top:111.91px;font-size:32px;color:#dfe1e5;font-weight:400;font-family:'Liberation Sans', sans-serif;">Repository Diff: system.rs</div>
<svg style="position:absolute;left:1184px;top:115px;" width="22" height="22" viewBox="0 0 22 22" fill="none" stroke-linecap="round" stroke-linejoin="round"><path d="M3 3 L19 19 M19 3 L3 19" stroke="#8c8f96" stroke-width="2.4" stroke-linecap="round"/></svg>
<div style="position:absolute;left:750px;top:159px;width:474px;height:6px;background:#5a5b61;border-radius:3px;"></div>
<div style="position:absolute;left:3705px;top:111px;width:6px;height:6px;background:#ced0d6;border-radius:3px;"></div>
<div style="position:absolute;left:3705px;top:123px;width:6px;height:6px;background:#ced0d6;border-radius:3px;"></div>
<div style="position:absolute;left:3705px;top:135px;width:6px;height:6px;background:#ced0d6;border-radius:3px;"></div>
<div style="position:absolute;left:750px;top:165px;width:3008px;height:2px;background:#393a40;border-radius:0px;"></div>
<div style="position:absolute;left:750px;top:167px;width:3008px;height:128px;background:#2b2b30;border-radius:0px;"></div>
<svg style="position:absolute;left:792px;top:192px;" width="30" height="32" viewBox="0 0 30 32" fill="none" stroke-linecap="round" stroke-linejoin="round"><g stroke="#ced0d6" stroke-width="2.4"><path d="M15 30 V3 M5 13 L15 3 L25 13"/></g></svg>
<svg style="position:absolute;left:859px;top:192px;" width="30" height="32" viewBox="0 0 30 32" fill="none" stroke-linecap="round" stroke-linejoin="round"><g stroke="#ced0d6" stroke-width="2.4"><path d="M15 2 V29 M5 19 L15 29 L25 19"/></g></svg>
<svg style="position:absolute;left:925px;top:190px;" width="36" height="36" viewBox="0 0 36 36" fill="none" stroke-linecap="round" stroke-linejoin="round"><g stroke="#ced0d6" stroke-width="2.4"><path d="M4 32 L4 25 L24 5 Q27 2 30 5 Q33 8 30 11 L10 32 Z M20 9 L27 16"/></g></svg>
<div style="position:absolute;left:984px;top:184px;width:2px;height:46px;background:#45474c;border-radius:0px;"></div>
<svg style="position:absolute;left:1011px;top:194px;" width="38" height="30" viewBox="0 0 38 30" fill="none" stroke-linecap="round" stroke-linejoin="round"><g stroke="#ced0d6" stroke-width="2.4"><path d="M35 15 H4 M14 4 L3 15 L14 26"/></g></svg>
<svg style="position:absolute;left:1080px;top:194px;" width="38" height="30" viewBox="0 0 38 30" fill="none" stroke-linecap="round" stroke-linejoin="round"><g stroke="#ced0d6" stroke-width="2.4"><path d="M3 15 H34 M24 4 L35 15 L24 26"/></g></svg>
<svg style="position:absolute;left:1148px;top:189px;" width="44" height="44" viewBox="0 0 44 44" fill="none" stroke-linecap="round" stroke-linejoin="round"><g stroke="#ced0d6" stroke-width="2.4"><rect x="4" y="3" width="27" height="34" rx="5"/><path d="M11 13 H24 M11 20 H24 M11 27 H24"/></g><path d="M43 31 V43 H31 Z" fill="#ced0d6"/></svg>
<div style="position:absolute;left:1210px;top:181px;width:350px;height:51px;border:2px solid #4f5157;background:transparent;border-radius:8px;"></div>
<div class="t" style="left:1234px;top:192.60px;font-size:30px;color:#dfe1e5;font-weight:400;font-family:'Liberation Sans', sans-serif;">Side-by-side viewer</div>
<svg style="position:absolute;left:1517px;top:203px;" width="22" height="13" viewBox="0 0 22 13" fill="none" stroke-linecap="round" stroke-linejoin="round"><path d="M0 0 H22 L11 12 Z" fill="#9a9ca2"/></svg>
<div style="position:absolute;left:1604px;top:181px;width:261px;height:51px;border:2px solid #4f5157;background:transparent;border-radius:8px;"></div>
<div class="t" style="left:1628px;top:192.94px;font-size:29.6px;color:#dfe1e5;font-weight:400;font-family:'Liberation Sans', sans-serif;">Do not ignore</div>
<svg style="position:absolute;left:1823px;top:203px;" width="22" height="13" viewBox="0 0 22 13" fill="none" stroke-linecap="round" stroke-linejoin="round"><path d="M0 0 H22 L11 12 Z" fill="#9a9ca2"/></svg>
<div style="position:absolute;left:1891px;top:181px;width:289px;height:51px;border:2px solid #4f5157;background:transparent;border-radius:8px;"></div>
<div class="t" style="left:1915px;top:192.94px;font-size:29.6px;color:#dfe1e5;font-weight:400;font-family:'Liberation Sans', sans-serif;">Highlight words</div>
<svg style="position:absolute;left:2137px;top:203px;" width="22" height="13" viewBox="0 0 22 13" fill="none" stroke-linecap="round" stroke-linejoin="round"><path d="M0 0 H22 L11 12 Z" fill="#9a9ca2"/></svg>
<div style="position:absolute;left:1582px;top:184px;width:2px;height:46px;background:#45474c;border-radius:0px;"></div>
<svg style="position:absolute;left:2214px;top:191px;" width="28" height="36" viewBox="0 0 28 36" fill="none" stroke-linecap="round" stroke-linejoin="round"><g stroke="#ced0d6" stroke-width="2.4"><path d="M3 3 L14 13 L25 3 M3 33 L14 23 L25 33"/></g></svg>
<div style="position:absolute;left:2269px;top:180px;width:55px;height:56px;background:#43454a;border-radius:8px;"></div>
<svg style="position:absolute;left:2276px;top:188px;" width="42" height="42" viewBox="0 0 42 42" fill="none" stroke-linecap="round" stroke-linejoin="round"><g stroke="#ced0d6" stroke-width="2.4"><path d="M9 3 V33 M3 9 L9 3 L15 9 M3 27 L9 33 L15 27 M27 3 V14 M22 8 L27 3 L32 8"/></g><g stroke="#6e9cf5" stroke-width="2.6" fill="none" stroke-linecap="round"><path d="M20 26 A8 8 0 0 1 34 22 M36 30 A8 8 0 0 1 22 34"/><path d="M34 17 V22 H29 M22 39 V34 H27"/></g></svg>
<svg style="position:absolute;left:2345px;top:189px;" width="40" height="40" viewBox="0 0 36 36" fill="none" stroke-linecap="round" stroke-linejoin="round"><g stroke="#ced0d6" stroke-width="2.16" stroke-linejoin="round"><path d="M29.20 18.00 L29.20 18.29 L29.20 18.59 L29.20 18.88 L29.21 19.18 L29.25 19.48 L29.34 19.80 L29.53 20.14 L29.88 20.53 L30.43 20.98 L31.14 21.52 L31.82 22.09 L32.32 22.65 L32.58 23.16 L32.67 23.63 L32.64 24.07 L32.55 24.48 L32.41 24.87 L32.24 25.26 L32.06 25.63 L31.86 26.00 L31.64 26.36 L31.41 26.71 L31.16 27.04 L30.88 27.36 L30.57 27.65 L30.21 27.89 L29.77 28.05 L29.19 28.07 L28.46 27.92 L27.62 27.62 L26.80 27.27 L26.13 27.03 L25.62 26.92 L25.23 26.93 L24.91 27.00 L24.63 27.12 L24.36 27.26 L24.11 27.40 L23.85 27.55 L23.60 27.70 L23.35 27.85 L23.09 27.99 L22.84 28.14 L22.59 28.30 L22.34 28.49 L22.12 28.72 L21.91 29.06 L21.75 29.55 L21.63 30.26 L21.52 31.14 L21.37 32.02 L21.13 32.73 L20.82 33.21 L20.46 33.52 L20.07 33.71 L19.66 33.84 L19.25 33.91 L18.84 33.96 L18.42 33.99 L18.00 34.00 L17.58 33.99 L17.16 33.96 L16.75 33.91 L16.34 33.84 L15.93 33.71 L15.54 33.52 L15.18 33.21 L14.87 32.73 L14.63 32.02 L14.48 31.14 L14.37 30.26 L14.25 29.55 L14.09 29.06 L13.88 28.72 L13.66 28.49 L13.41 28.30 L13.16 28.14 L12.91 27.99 L12.65 27.85 L12.40 27.70 L12.15 27.55 L11.89 27.40 L11.64 27.26 L11.37 27.12 L11.09 27.00 L10.77 26.93 L10.38 26.92 L9.87 27.03 L9.20 27.27 L8.38 27.62 L7.54 27.92 L6.81 28.07 L6.23 28.05 L5.79 27.89 L5.43 27.65 L5.12 27.36 L4.84 27.04 L4.59 26.71 L4.36 26.36 L4.14 26.00 L3.94 25.63 L3.76 25.26 L3.59 24.87 L3.45 24.48 L3.36 24.07 L3.33 23.63 L3.42 23.16 L3.68 22.65 L4.18 22.09 L4.86 21.52 L5.57 20.98 L6.12 20.53 L6.47 20.14 L6.66 19.80 L6.75 19.48 L6.79 19.18 L6.80 18.88 L6.80 18.59 L6.80 18.29 L6.80 18.00 L6.80 17.71 L6.80 17.41 L6.80 17.12 L6.79 16.82 L6.75 16.52 L6.66 16.20 L6.47 15.86 L6.12 15.47 L5.57 15.02 L4.86 14.48 L4.18 13.91 L3.68 13.35 L3.42 12.84 L3.33 12.37 L3.36 11.93 L3.45 11.52 L3.59 11.13 L3.76 10.74 L3.94 10.37 L4.14 10.00 L4.36 9.64 L4.59 9.29 L4.84 8.96 L5.12 8.64 L5.43 8.35 L5.79 8.11 L6.23 7.95 L6.81 7.93 L7.54 8.08 L8.38 8.38 L9.20 8.73 L9.87 8.97 L10.38 9.08 L10.77 9.07 L11.09 9.00 L11.37 8.88 L11.64 8.74 L11.89 8.60 L12.15 8.45 L12.40 8.30 L12.65 8.15 L12.91 8.01 L13.16 7.86 L13.41 7.70 L13.66 7.51 L13.88 7.28 L14.09 6.94 L14.25 6.45 L14.37 5.74 L14.48 4.86 L14.63 3.98 L14.87 3.27 L15.18 2.79 L15.54 2.48 L15.93 2.29 L16.34 2.16 L16.75 2.09 L17.16 2.04 L17.58 2.01 L18.00 2.00 L18.42 2.01 L18.84 2.04 L19.25 2.09 L19.66 2.16 L20.07 2.29 L20.46 2.48 L20.82 2.79 L21.13 3.27 L21.37 3.98 L21.52 4.86 L21.63 5.74 L21.75 6.45 L21.91 6.94 L22.12 7.28 L22.34 7.51 L22.59 7.70 L22.84 7.86 L23.09 8.01 L23.35 8.15 L23.60 8.30 L23.85 8.45 L24.11 8.60 L24.36 8.74 L24.63 8.88 L24.91 9.00 L25.23 9.07 L25.62 9.08 L26.13 8.97 L26.80 8.73 L27.62 8.38 L28.46 8.08 L29.19 7.93 L29.77 7.95 L30.21 8.11 L30.57 8.35 L30.88 8.64 L31.16 8.96 L31.41 9.29 L31.64 9.64 L31.86 10.00 L32.06 10.37 L32.24 10.74 L32.41 11.13 L32.55 11.52 L32.64 11.93 L32.67 12.37 L32.58 12.84 L32.32 13.35 L31.82 13.91 L31.14 14.48 L30.43 15.02 L29.88 15.47 L29.53 15.86 L29.34 16.20 L29.25 16.52 L29.21 16.82 L29.20 17.12 L29.20 17.41 L29.20 17.71 Z"/><circle cx="18" cy="18" r="4.6"/></g></svg>
<svg style="position:absolute;left:2377px;top:222px;" width="10" height="10" viewBox="0 0 10 10" fill="none" stroke-linecap="round" stroke-linejoin="round"><path d="M10 0 V10 H0 Z" fill="#ced0d6"/></svg>
<div style="position:absolute;left:2406px;top:184px;width:2px;height:46px;background:#45474c;border-radius:0px;"></div>
<svg style="position:absolute;left:2436px;top:189px;" width="30" height="40" viewBox="0 0 30 40" fill="none" stroke-linecap="round" stroke-linejoin="round"><g stroke="#ced0d6" stroke-width="2.6" fill="none" stroke-linecap="round"><path d="M5 11 Q5 3 15 3 Q25 3 25 11 Q25 16 20 19 Q15 22 15 27 V28"/></g><circle cx="15" cy="35.5" r="2.2" fill="#ced0d6"/></svg>
<div class="t" style="left:3563px;top:188.80px;font-size:34.5px;color:#dfe1e5;font-weight:400;font-family:'Liberation Sans', sans-serif;">1 difference</div>
<svg style="position:absolute;left:766px;top:254px;" width="28" height="32" viewBox="0 0 28 32" fill="none" stroke-linecap="round" stroke-linejoin="round"><g stroke="#ced0d6" stroke-width="2.4"><rect x="2.5" y="13" width="23" height="17" rx="3.5"/><path d="M7 13 V9 Q7 2.5 14 2.5 Q21 2.5 21 9 V13 M14 19 V24"/></g></svg>
<div class="t" style="left:801px;top:252.80px;font-size:34.5px;color:#dfe1e5;font-weight:400;font-family:'Liberation Sans', sans-serif;">02ac5c4c</div>
<svg style="position:absolute;left:2300px;top:254px;" width="28" height="32" viewBox="0 0 28 32" fill="none" stroke-linecap="round" stroke-linejoin="round"><g stroke="#ced0d6" stroke-width="2.4"><rect x="2.5" y="13" width="23" height="17" rx="3.5"/><path d="M7 13 V9 Q7 2.5 14 2.5 Q21 2.5 21 9 V13 M14 19 V24"/></g></svg>
<div class="t" style="left:2335px;top:253.22px;font-size:34px;color:#dfe1e5;font-weight:400;font-family:'Liberation Sans', sans-serif;">49bbbe01 (system.rs)</div>
<div style="position:absolute;left:750px;top:295px;width:3008px;height:1090px;background:#1e1f24;border-radius:0px;"></div>
<svg style="position:absolute;left:750px;top:830px;" width="3008" height="240" viewBox="0 0 3008 240" fill="none" stroke-linecap="round" stroke-linejoin="round"><rect x="0" y="12" width="1478" height="4" fill="#31493a"/><path d="M1470 12 L3008 12 L3008 231 L1535 231 Q1532 231 1531 228 L1478 19 Q1476 12 1470 12 Z" fill="#2d4237"/></svg>
<div style="position:absolute;left:2045px;top:295px;width:2px;height:1090px;background:#303137;border-radius:0px;"></div>
<div style="position:absolute;left:2463px;top:295px;width:2px;height:1090px;background:#303137;border-radius:0px;"></div>
<svg style="position:absolute;left:752px;top:302px;" width="36" height="30" viewBox="0 0 36 30" fill="none" stroke-linecap="round" stroke-linejoin="round"><path d="M5 15 L13.5 23.5 L31 6" stroke="#5a9a66" stroke-width="6.5" fill="none"/><path d="M5 15 L13.5 23.5 L31 6" stroke="#1e1f24" stroke-width="2.4" fill="none"/></svg>
<svg style="position:absolute;left:3719px;top:302px;" width="36" height="30" viewBox="0 0 36 30" fill="none" stroke-linecap="round" stroke-linejoin="round"><path d="M5 15 L13.5 23.5 L31 6" stroke="#5a9a66" stroke-width="6.5" fill="none"/><path d="M5 15 L13.5 23.5 L31 6" stroke="#1e1f24" stroke-width="2.4" fill="none"/></svg>
<div style="position:absolute;left:750px;top:295px;width:1293px;height:1090px;overflow:hidden">
<div class="t" style="left:295px;top:24.43px;font-size:32.08px;color:#bcbec4;font-weight:400;font-family:'Liberation Mono', monospace;-webkit-text-stroke:0.45px #bcbec4">winit_window.set_ime_position(LogicalPosition::new(</div>
<div class="t" style="left:372px;top:78.43px;font-size:32.08px;color:#bcbec4;font-weight:400;font-family:'Liberation Mono', monospace;-webkit-text-stroke:0.45px #bcbec4"><u>window</u>.ime_position.x,</div>
<div class="t" style="left:372px;top:132.43px;font-size:32.08px;color:#bcbec4;font-weight:400;font-family:'Liberation Mono', monospace;-webkit-text-stroke:0.45px #bcbec4"><u>window</u>.ime_position.y,</div>
<div class="t" style="left:295px;top:186.43px;font-size:32.08px;color:#bcbec4;font-weight:400;font-family:'Liberation Mono', monospace;-webkit-text-stroke:0.45px #bcbec4">));</div>
<div class="t" style="left:218px;top:240.43px;font-size:32.08px;color:#bcbec4;font-weight:400;font-family:'Liberation Mono', monospace;-webkit-text-stroke:0.45px #bcbec4">}</div>
<div class="t" style="left:218px;top:348.43px;font-size:32.08px;color:#bcbec4;font-weight:400;font-family:'Liberation Mono', monospace;-webkit-text-stroke:0.45px #bcbec4"><span style="color:#cf8e6d">if</span> <u>window</u>.window_theme != <u>cache</u>.window.window_theme {</div>
<div class="t" style="left:295px;top:402.43px;font-size:32.08px;color:#bcbec4;font-weight:400;font-family:'Liberation Mono', monospace;-webkit-text-stroke:0.45px #bcbec4">winit_window.set_theme(<u>window</u>.window_theme.map(convert_window_theme));</div>
<div class="t" style="left:218px;top:456.43px;font-size:32.08px;color:#bcbec4;font-weight:400;font-family:'Liberation Mono', monospace;-webkit-text-stroke:0.45px #bcbec4">}</div>
<div class="t" style="left:218px;top:564.43px;font-size:32.08px;color:#bcbec4;font-weight:400;font-family:'Liberation Mono', monospace;-webkit-text-stroke:0.45px #bcbec4"><u>cache</u>.window = <u>window</u>.clone();</div>
<div class="t" style="left:141px;top:618.43px;font-size:32.08px;color:#bcbec4;font-weight:400;font-family:'Liberation Mono', monospace;-webkit-text-stroke:0.45px #bcbec4">}</div>
<div class="t" style="left:64px;top:672.43px;font-size:32.08px;color:#bcbec4;font-weight:400;font-family:'Liberation Mono', monospace;-webkit-text-stroke:0.45px #bcbec4">}</div>
</div>
<div style="position:absolute;left:2465px;top:295px;width:1293px;height:1090px;overflow:hidden">
<div class="t" style="left:251px;top:24.43px;font-size:32.08px;color:#bcbec4;font-weight:400;font-family:'Liberation Mono', monospace;-webkit-text-stroke:0.45px #bcbec4">winit_window.set_ime_position(LogicalPosition::new(</div>
<div class="t" style="left:328px;top:78.43px;font-size:32.08px;color:#bcbec4;font-weight:400;font-family:'Liberation Mono', monospace;-webkit-text-stroke:0.45px #bcbec4"><u>window</u>.ime_position.x,</div>
<div class="t" style="left:328px;top:132.43px;font-size:32.08px;color:#bcbec4;font-weight:400;font-family:'Liberation Mono', monospace;-webkit-text-stroke:0.45px #bcbec4"><u>window</u>.ime_position.y,</div>
<div class="t" style="left:251px;top:186.43px;font-size:32.08px;color:#bcbec4;font-weight:400;font-family:'Liberation Mono', monospace;-webkit-text-stroke:0.45px #bcbec4">));</div>
<div class="t" style="left:174px;top:240.43px;font-size:32.08px;color:#bcbec4;font-weight:400;font-family:'Liberation Mono', monospace;-webkit-text-stroke:0.45px #bcbec4">}</div>
<div class="t" style="left:174px;top:348.43px;font-size:32.08px;color:#bcbec4;font-weight:400;font-family:'Liberation Mono', monospace;-webkit-text-stroke:0.45px #bcbec4"><span style="color:#cf8e6d">if</span> <u>window</u>.window_theme != <u>cache</u>.window.window_theme {</div>
<div class="t" style="left:251px;top:402.43px;font-size:32.08px;color:#bcbec4;font-weight:400;font-family:'Liberation Mono', monospace;-webkit-text-stroke:0.45px #bcbec4">winit_window.set_theme(<u>window</u>.window_theme.map(convert_window_theme));</div>
<div class="t" style="left:174px;top:456.43px;font-size:32.08px;color:#bcbec4;font-weight:400;font-family:'Liberation Mono', monospace;-webkit-text-stroke:0.45px #bcbec4">}</div>
<div class="t" style="left:174px;top:564.43px;font-size:32.08px;color:#c3cbc5;font-weight:400;font-family:'Liberation Mono', monospace;-webkit-text-stroke:0.45px #c3cbc5"><span style="color:#cf8e6d">if</span> <u>window</u>.visible != <u>cache</u>.window.visible {</div>
<div class="t" style="left:251px;top:618.43px;font-size:32.08px;color:#c3cbc5;font-weight:400;font-family:'Liberation Mono', monospace;-webkit-text-stroke:0.45px #c3cbc5">winit_window.set_visible(<u>window</u>.visible);</div>
<div class="t" style="left:174px;top:672.43px;font-size:32.08px;color:#c3cbc5;font-weight:400;font-family:'Liberation Mono', monospace;-webkit-text-stroke:0.45px #c3cbc5">}</div>
<div class="t" style="left:174px;top:780.43px;font-size:32.08px;color:#bcbec4;font-weight:400;font-family:'Liberation Mono', monospace;-webkit-text-stroke:0.45px #bcbec4"><u>cache</u>.window = <u>window</u>.clone();</div>
<div class="t" style="left:97px;top:834.43px;font-size:32.08px;color:#bcbec4;font-weight:400;font-family:'Liberation Mono', monospace;-webkit-text-stroke:0.45px #bcbec4">}</div>
<div class="t" style="left:20px;top:888.43px;font-size:32.08px;color:#bcbec4;font-weight:400;font-family:'Liberation Mono', monospace;-webkit-text-stroke:0.45px #bcbec4">}</div>
</div>
<div class="t" style="left:2127px;top:320.64px;font-size:30.5px;color:#4e525a;font-weight:400;font-family:'Liberation Mono', monospace;">301</div>
<div class="t" style="left:2127px;top:374.64px;font-size:30.5px;color:#4e525a;font-weight:400;font-family:'Liberation Mono', monospace;">302</div>
<div class="t" style="left:2127px;top:428.64px;font-size:30.5px;color:#4e525a;font-weight:400;font-family:'Liberation Mono', monospace;">303</div>
<div class="t" style="left:2127px;top:482.64px;font-size:30.5px;color:#4e525a;font-weight:400;font-family:'Liberation Mono', monospace;">304</div>
<div class="t" style="left:2127px;top:536.64px;font-size:30.5px;color:#4e525a;font-weight:400;font-family:'Liberation Mono', monospace;">305</div>
<div class="t" style="left:2127px;top:590.64px;font-size:30.5px;color:#4e525a;font-weight:400;font-family:'Liberation Mono', monospace;">306</div>
<div class="t" style="left:2127px;top:644.64px;font-size:30.5px;color:#4e525a;font-weight:400;font-family:'Liberation Mono', monospace;">307</div>
<div class="t" style="left:2127px;top:698.64px;font-size:30.5px;color:#4e525a;font-weight:400;font-family:'Liberation Mono', monospace;">308</div>
<div class="t" style="left:2127px;top:752.64px;font-size:30.5px;color:#4e525a;font-weight:400;font-family:'Liberation Mono', monospace;">309</div>
<div class="t" style="left:2127px;top:806.64px;font-size:30.5px;color:#4e525a;font-weight:400;font-family:'Liberation Mono', monospace;">310</div>
<div class="t" style="left:2127px;top:860.64px;font-size:30.5px;color:#a8abb2;font-weight:400;font-family:'Liberation Mono', monospace;">311</div>
<div class="t" style="left:2127px;top:914.64px;font-size:30.5px;color:#4e525a;font-weight:400;font-family:'Liberation Mono', monospace;">312</div>
<div class="t" style="left:2127px;top:968.64px;font-size:30.5px;color:#4e525a;font-weight:400;font-family:'Liberation Mono', monospace;">313</div>
<div class="t" style="left:2127px;top:1022.64px;font-size:30.5px;color:#4e525a;font-weight:400;font-family:'Liberation Mono', monospace;">314</div>
<div class="t" style="left:2127px;top:1076.64px;font-size:30.5px;color:#4e525a;font-weight:400;font-family:'Liberation Mono', monospace;">315</div>
<div class="t" style="left:2323px;top:320.64px;font-size:30.5px;color:#4e525a;font-weight:400;font-family:'Liberation Mono', monospace;">301</div>
<div class="t" style="left:2323px;top:374.64px;font-size:30.5px;color:#4e525a;font-weight:400;font-family:'Liberation Mono', monospace;">302</div>
<div class="t" style="left:2323px;top:428.64px;font-size:30.5px;color:#4e525a;font-weight:400;font-family:'Liberation Mono', monospace;">303</div>
<div class="t" style="left:2323px;top:482.64px;font-size:30.5px;color:#4e525a;font-weight:400;font-family:'Liberation Mono', monospace;">304</div>
<div class="t" style="left:2323px;top:536.64px;font-size:30.5px;color:#4e525a;font-weight:400;font-family:'Liberation Mono', monospace;">305</div>
<div class="t" style="left:2323px;top:590.64px;font-size:30.5px;color:#4e525a;font-weight:400;font-family:'Liberation Mono', monospace;">306</div>
<div class="t" style="left:2323px;top:644.64px;font-size:30.5px;color:#4e525a;font-weight:400;font-family:'Liberation Mono', monospace;">307</div>
<div class="t" style="left:2323px;top:698.64px;font-size:30.5px;color:#4e525a;font-weight:400;font-family:'Liberation Mono', monospace;">308</div>
<div class="t" style="left:2323px;top:752.64px;font-size:30.5px;color:#4e525a;font-weight:400;font-family:'Liberation Mono', monospace;">309</div>
<div class="t" style="left:2323px;top:806.64px;font-size:30.5px;color:#4e525a;font-weight:400;font-family:'Liberation Mono', monospace;">310</div>
<div class="t" style="left:2323px;top:860.64px;font-size:30.5px;color:#a8b5ad;font-weight:400;font-family:'Liberation Mono', monospace;">311</div>
<div class="t" style="left:2323px;top:914.64px;font-size:30.5px;color:#4f6057;font-weight:400;font-family:'Liberation Mono', monospace;">312</div>
<div class="t" style="left:2323px;top:968.64px;font-size:30.5px;color:#4f6057;font-weight:400;font-family:'Liberation Mono', monospace;">313</div>
<div class="t" style="left:2323px;top:1022.64px;font-size:30.5px;color:#4f6057;font-weight:400;font-family:'Liberation Mono', monospace;">314</div>
<div class="t" style="left:2323px;top:1076.64px;font-size:30.5px;color:#4e525a;font-weight:400;font-family:'Liberation Mono', monospace;">315</div>
<div class="t" style="left:2323px;top:1130.64px;font-size:30.5px;color:#4e525a;font-weight:400;font-family:'Liberation Mono', monospace;">316</div>
<div class="t" style="left:2323px;top:1184.64px;font-size:30.5px;color:#4e525a;font-weight:400;font-family:'Liberation Mono', monospace;">317</div>
<div class="t" style="left:2323px;top:1238.64px;font-size:30.5px;color:#4e525a;font-weight:400;font-family:'Liberation Mono', monospace;">318</div>
<div class="t" style="left:2323px;top:1292.64px;font-size:30.5px;color:#4e525a;font-weight:400;font-family:'Liberation Mono', monospace;">319</div>
<div style="position:absolute;left:750px;top:1032px;width:7px;height:3px;background:#8c8f96;border-radius:0px;"></div>
<div style="position:absolute;left:758px;top:1292px;width:18px;height:88px;background:#4a4b50;border-radius:9px;"></div>
<div style="position:absolute;left:750px;top:1350px;width:36px;height:6px;background:rgba(100,160,108,0.6);border-radius:0px;"></div>
<div style="position:absolute;left:3733px;top:1280px;width:17px;height:88px;background:#4a4b50;border-radius:8px;"></div>
<div style="position:absolute;left:3722px;top:1338px;width:36px;height:10px;background:rgba(100,160,108,0.6);border-radius:0px;"></div>
<div style="position:absolute;left:82px;top:1385px;width:3676px;height:712px;background:#2b2b30;border-radius:0px;"></div>
<div style="position:absolute;left:82px;top:1385px;width:3676px;height:2px;background:#1d1e22;border-radius:0px;"></div>
<div class="t" style="left:121px;top:1409.34px;font-size:31.5px;color:#dfe1e5;font-weight:700;font-family:'Liberation Sans', sans-serif;">Git</div>
<div class="t" style="left:251px;top:1409.34px;font-size:31.5px;color:#dfe1e5;font-weight:400;font-family:'Liberation Sans', sans-serif;">Log</div>
<div style="position:absolute;left:212px;top:1456px;width:130px;height:7px;background:#3574f0;border-radius:3.5px;"></div>
<div class="t" style="left:381px;top:1409.34px;font-size:31.5px;color:#dfe1e5;font-weight:400;font-family:'Liberation Sans', sans-serif;">Console</div>
<svg style="position:absolute;left:533px;top:1416px;" width="22" height="22" viewBox="0 0 22 22" fill="none" stroke-linecap="round" stroke-linejoin="round"><path d="M3 3 L19 19 M19 3 L3 19" stroke="#8c8f96" stroke-width="2.4" stroke-linecap="round"/></svg>
<div class="t" style="left:621px;top:1408.91px;font-size:32px;color:#dfe1e5;font-weight:400;font-family:'Liberation Sans', sans-serif;">Update Info: 21/08/2023, 12:40</div>
<svg style="position:absolute;left:1101px;top:1416px;" width="22" height="22" viewBox="0 0 22 22" fill="none" stroke-linecap="round" stroke-linejoin="round"><path d="M3 3 L19 19 M19 3 L3 19" stroke="#8c8f96" stroke-width="2.4" stroke-linecap="round"/></svg>
<div style="position:absolute;left:3627px;top:1409px;width:6px;height:6px;background:#ced0d6;border-radius:3px;"></div>
<div style="position:absolute;left:3627px;top:1421px;width:6px;height:6px;background:#ced0d6;border-radius:3px;"></div>
<div style="position:absolute;left:3627px;top:1433px;width:6px;height:6px;background:#ced0d6;border-radius:3px;"></div>
<div style="position:absolute;left:3682px;top:1422px;width:32px;height:3px;background:#ced0d6;border-radius:1.5px;"></div>
<div style="position:absolute;left:82px;top:1463px;width:3676px;height:2px;background:#1d1e22;border-radius:0px;"></div>
<div style="position:absolute;left:166px;top:1465px;width:2px;height:632px;background:#1d1e22;border-radius:0px;"></div>
<svg style="position:absolute;left:112px;top:1506px;" width="24" height="28" viewBox="0 0 24 28" fill="none" stroke-linecap="round" stroke-linejoin="round"><path d="M16 3 L6 14 L16 25" stroke="#ced0d6" stroke-width="2.4" fill="none" stroke-linecap="round" stroke-linejoin="round"/></svg>
<div style="position:absolute;left:100px;top:1562px;width:46px;height:2px;background:#45474c;border-radius:0px;"></div>
<svg style="position:absolute;left:104px;top:1588px;" width="38" height="38" viewBox="0 0 38 38" fill="none" stroke-linecap="round" stroke-linejoin="round"><path d="M19 2 V36 M2 19 H36" stroke="#ced0d6" stroke-width="2.4" stroke-linecap="round"/></svg>
<svg style="position:absolute;left:108px;top:1661px;" width="32" height="32" viewBox="0 0 32 32" fill="none" stroke-linecap="round" stroke-linejoin="round"><g stroke="#6f7278" stroke-width="2.4" fill="none" stroke-linecap="round" stroke-linejoin="round"><path d="M27 4 L5 26 M5 12 V27 H20"/></g></svg>
<svg style="position:absolute;left:107px;top:1724px;" width="34" height="40" viewBox="0 0 34 40" fill="none" stroke-linecap="round" stroke-linejoin="round"><g stroke="#ced0d6" stroke-width="2.4" fill="none" stroke-linecap="round" stroke-linejoin="round"><path d="M2 9 H32 M11 9 V4 H23 V9 M5 9 L7 36 H27 L29 9 M13 16 V29 M21 16 V29"/></g></svg>
<svg style="position:absolute;left:103px;top:1792px;" width="44" height="40" viewBox="0 0 44 40" fill="none" stroke-linecap="round" stroke-linejoin="round"><g stroke="#ced0d6" stroke-width="2.4"><path d="M18 11 H40 M25.5 3.5 L18 11 L25.5 18.5"/><path d="M2 28 H24 M16.5 20.5 L24 28 L16.5 35.5"/></g></svg>
<svg style="position:absolute;left:105px;top:1861px;" width="38" height="38" viewBox="0 0 20 20" fill="none" stroke-linecap="round" stroke-linejoin="round"><g stroke="#ced0d6" stroke-width="1.25"><circle cx="8.5" cy="8.5" r="5.5"/><path d="M12.5 12.5 L17 17"/></g></svg>
<svg style="position:absolute;left:108px;top:1933px;" width="32" height="32" viewBox="0 0 32 32" fill="none" stroke-linecap="round" stroke-linejoin="round"><g stroke="#ced0d6" stroke-width="2.4" fill="none" stroke-linecap="round" stroke-linejoin="round" stroke-dasharray="5 4"><path d="M27 4 L5 26"/></g><g stroke="#ced0d6" stroke-width="2.4" fill="none" stroke-linecap="round"><path d="M5 12 V27 H20" stroke-dasharray="5 4"/></g></svg>
<svg style="position:absolute;left:112px;top:2039px;" width="24" height="28" viewBox="0 0 24 28" fill="none" stroke-linecap="round" stroke-linejoin="round"><path d="M8 3 L18 14 L8 25" stroke="#ced0d6" stroke-width="2.4" fill="none" stroke-linecap="round" stroke-linejoin="round"/></svg>
<svg style="position:absolute;left:199px;top:1489px;" width="38" height="38" viewBox="0 0 20 20" fill="none" stroke-linecap="round" stroke-linejoin="round"><g stroke="#9a9ca2" stroke-width="1.25"><circle cx="8.5" cy="8.5" r="5.5"/><path d="M12.5 12.5 L17 17"/></g></svg>
<div style="position:absolute;left:168px;top:1552px;width:720px;height:2px;background:#1d1e22;border-radius:0px;"></div>
<div style="position:absolute;left:198px;top:1778px;width:659px;height:56px;background:#43454a;border-radius:12px;"></div>
<svg style="position:absolute;left:200px;top:1570px;" width="26" height="26" viewBox="0 0 20 20" fill="none" stroke-linecap="round" stroke-linejoin="round"><g stroke="#ced0d6" stroke-width="1.6"><path d="M2 5.6 L10 14 L18 5.6"/></g></svg>
<div class="t" style="left:249px;top:1564.80px;font-size:34.5px;color:#dfe1e5;font-weight:400;font-family:'Liberation Sans', sans-serif;">Local</div>
<svg style="position:absolute;left:295px;top:1621px;" width="38" height="38" viewBox="0 0 38 38" fill="none" stroke-linecap="round" stroke-linejoin="round"><path d="M20 2 H34 V16 L17 33 L3 19 Z" fill="#f2c55c" stroke="#f2c55c" stroke-width="2" stroke-linejoin="round"/><circle cx="26" cy="10" r="3.5" fill="#2b2b30"/></svg>
<div class="t" style="left:343px;top:1620.80px;font-size:34.5px;color:#dfe1e5;font-weight:400;font-family:'Liberation Sans', sans-serif;">main</div>
<svg style="position:absolute;left:200px;top:1682px;" width="26" height="26" viewBox="0 0 20 20" fill="none" stroke-linecap="round" stroke-linejoin="round"><g stroke="#ced0d6" stroke-width="1.6"><path d="M2 5.6 L10 14 L18 5.6"/></g></svg>
<div class="t" style="left:249px;top:1676.80px;font-size:34.5px;color:#dfe1e5;font-weight:400;font-family:'Liberation Sans', sans-serif;">Remote</div>
<svg style="position:absolute;left:258px;top:1738px;" width="26" height="26" viewBox="0 0 20 20" fill="none" stroke-linecap="round" stroke-linejoin="round"><g stroke="#ced0d6" stroke-width="1.6"><path d="M2 5.6 L10 14 L18 5.6"/></g></svg>
<svg style="position:absolute;left:292px;top:1731px;" width="42" height="42" viewBox="0 0 20 20" fill="none" stroke-linecap="round" stroke-linejoin="round"><g stroke="#ced0d6" stroke-width="1.15"><path d="M2.5 5.2 Q2.5 3.5 4.2 3.5 H7.6 L9.4 5.3 H15.8 Q17.5 5.3 17.5 7 V14.8 Q17.5 16.5 15.8 16.5 H4.2 Q2.5 16.5 2.5 14.8 Z" fill="#43454a"/></g></svg>
<div class="t" style="left:342px;top:1732.80px;font-size:34.5px;color:#dfe1e5;font-weight:400;font-family:'Liberation Sans', sans-serif;">origin</div>
<svg style="position:absolute;left:345px;top:1788px;" width="36" height="36" viewBox="0 0 20 20" fill="none" stroke-linecap="round" stroke-linejoin="round"><path d="M10 1.8 L12.5 7.2 L18.3 7.8 L13.9 11.7 L15.2 17.5 L10 14.5 L4.8 17.5 L6.1 11.7 L1.7 7.8 L7.5 7.2 Z" fill="#f2c55c" stroke="#f2c55c" stroke-width="0.8"/></svg>
<div class="t" style="left:390px;top:1788.80px;font-size:34.5px;color:#dfe1e5;font-weight:400;font-family:'Liberation Sans', sans-serif;">main</div>
<svg style="position:absolute;left:296px;top:1850px;" width="26" height="26" viewBox="0 0 20 20" fill="none" stroke-linecap="round" stroke-linejoin="round"><g stroke="#ced0d6" stroke-width="1.6"><path d="M2 5.6 L10 14 L18 5.6"/></g></svg>
<svg style="position:absolute;left:341px;top:1843px;" width="42" height="42" viewBox="0 0 20 20" fill="none" stroke-linecap="round" stroke-linejoin="round"><g stroke="#ced0d6" stroke-width="1.15"><path d="M2.5 5.2 Q2.5 3.5 4.2 3.5 H7.6 L9.4 5.3 H15.8 Q17.5 5.3 17.5 7 V14.8 Q17.5 16.5 15.8 16.5 H4.2 Q2.5 16.5 2.5 14.8 Z" fill="#43454a"/></g></svg>
<div class="t" style="left:390px;top:1844.80px;font-size:34.5px;color:#dfe1e5;font-weight:400;font-family:'Liberation Sans', sans-serif;">create-pull-request</div>
<svg style="position:absolute;left:393px;top:1899px;" width="32" height="38" viewBox="0 0 32 38" fill="none" stroke-linecap="round" stroke-linejoin="round"><g stroke="#ced0d6" stroke-width="2.3" fill="none"><circle cx="8" cy="8" r="5.2"/><circle cx="23.4" cy="13" r="5.2"/><path d="M8 13.2 V34.5 M8 26 H19 Q23.4 26 23.4 21.6 V18.2"/></g></svg>
<div class="t" style="left:439px;top:1900.80px;font-size:34.5px;color:#dfe1e5;font-weight:400;font-family:'Liberation Sans', sans-serif;">patch</div>
<svg style="position:absolute;left:296px;top:1962px;" width="26" height="26" viewBox="0 0 20 20" fill="none" stroke-linecap="round" stroke-linejoin="round"><g stroke="#ced0d6" stroke-width="1.6"><path d="M2 5.6 L10 14 L18 5.6"/></g></svg>
<svg style="position:absolute;left:341px;top:1955px;" width="42" height="42" viewBox="0 0 20 20" fill="none" stroke-linecap="round" stroke-linejoin="round"><g stroke="#ced0d6" stroke-width="1.15"><path d="M2.5 5.2 Q2.5 3.5 4.2 3.5 H7.6 L9.4 5.3 H15.8 Q17.5 5.3 17.5 7 V14.8 Q17.5 16.5 15.8 16.5 H4.2 Q2.5 16.5 2.5 14.8 Z" fill="#43454a"/></g></svg>
<div class="t" style="left:390px;top:1956.80px;font-size:34.5px;color:#dfe1e5;font-weight:400;font-family:'Liberation Sans', sans-serif;">dependabot</div>
<svg style="position:absolute;left:345px;top:2018px;" width="26" height="26" viewBox="0 0 20 20" fill="none" stroke-linecap="round" stroke-linejoin="round"><g stroke="#ced0d6" stroke-width="1.6"><path d="M2 5.6 L10 14 L18 5.6"/></g></svg>
<svg style="position:absolute;left:388px;top:2011px;" width="42" height="42" viewBox="0 0 20 20" fill="none" stroke-linecap="round" stroke-linejoin="round"><g stroke="#ced0d6" stroke-width="1.15"><path d="M2.5 5.2 Q2.5 3.5 4.2 3.5 H7.6 L9.4 5.3 H15.8 Q17.5 5.3 17.5 7 V14.8 Q17.5 16.5 15.8 16.5 H4.2 Q2.5 16.5 2.5 14.8 Z" fill="#43454a"/></g></svg>
<div class="t" style="left:439px;top:2012.80px;font-size:34.5px;color:#dfe1e5;font-weight:400;font-family:'Liberation Sans', sans-serif;">cargo</div>
<div style="position:absolute;left:168px;top:1465px;width:720px;height:632px;overflow:hidden">
<svg style="position:absolute;left:273px;top:602px;" width="32" height="38" viewBox="0 0 32 38" fill="none" stroke-linecap="round" stroke-linejoin="round"><g stroke="#ced0d6" stroke-width="2.3" fill="none"><circle cx="8" cy="8" r="5.2"/><circle cx="23.4" cy="13" r="5.2"/><path d="M8 13.2 V34.5 M8 26 H19 Q23.4 26 23.4 21.6 V18.2"/></g></svg>
<div class="t" style="left:319px;top:603.80px;font-size:34.5px;color:#dfe1e5;font-weight:400;font-family:'Liberation Sans', sans-serif;">base64-0.21.0</div>
</div>
<div style="position:absolute;left:888px;top:1465px;width:2px;height:632px;background:#1d1e22;border-radius:0px;"></div>
<div style="position:absolute;left:897px;top:1472px;width:558px;height:68px;border:2px solid #4f5157;background:transparent;border-radius:9px;"></div>
<svg style="position:absolute;left:912px;top:1487px;" width="40" height="40" viewBox="0 0 20 20" fill="none" stroke-linecap="round" stroke-linejoin="round"><g stroke="#ced0d6" stroke-width="1.15"><circle cx="8.5" cy="8.5" r="5.5"/><path d="M12.5 12.5 L17 17"/></g></svg>
<svg style="position:absolute;left:942px;top:1500px;" width="16" height="12" viewBox="0 0 16 12" fill="none" stroke-linecap="round" stroke-linejoin="round"><path d="M2 2 H14 L8 9 Z" fill="#ced0d6"/></svg>
<div class="t" style="left:1338px;top:1491.22px;font-size:34px;color:#dfe1e5;font-weight:400;font-family:'Liberation Sans', sans-serif;">.*</div>
<div class="t" style="left:1401px;top:1492.07px;font-size:33px;color:#dfe1e5;font-weight:400;font-family:'Liberation Sans', sans-serif;">Cc</div>
<div class="t" style="left:1501px;top:1491.64px;font-size:33.5px;color:#6f737a;font-weight:400;font-family:'Liberation Sans', sans-serif;">Branch</div>
<svg style="position:absolute;left:1621px;top:1497px;" width="24" height="24" viewBox="0 0 20 20" fill="none" stroke-linecap="round" stroke-linejoin="round"><g stroke="#8c8f96" stroke-width="1.6"><path d="M2 5.6 L10 14 L18 5.6"/></g></svg>
<div class="t" style="left:1678px;top:1491.64px;font-size:33.5px;color:#6f737a;font-weight:400;font-family:'Liberation Sans', sans-serif;">User</div>
<svg style="position:absolute;left:1766px;top:1497px;" width="24" height="24" viewBox="0 0 20 20" fill="none" stroke-linecap="round" stroke-linejoin="round"><g stroke="#8c8f96" stroke-width="1.6"><path d="M2 5.6 L10 14 L18 5.6"/></g></svg>
<div class="t" style="left:1820px;top:1491.64px;font-size:33.5px;color:#6f737a;font-weight:400;font-family:'Liberation Sans', sans-serif;">Date</div>
<svg style="position:absolute;left:1907px;top:1497px;" width="24" height="24" viewBox="0 0 20 20" fill="none" stroke-linecap="round" stroke-linejoin="round"><g stroke="#8c8f96" stroke-width="1.6"><path d="M2 5.6 L10 14 L18 5.6"/></g></svg>
<div class="t" style="left:1963px;top:1491.64px;font-size:33.5px;color:#6f737a;font-weight:400;font-family:'Liberation Sans', sans-serif;">Paths</div>
<svg style="position:absolute;left:2063px;top:1497px;" width="24" height="24" viewBox="0 0 20 20" fill="none" stroke-linecap="round" stroke-linejoin="round"><g stroke="#8c8f96" stroke-width="1.6"><path d="M2 5.6 L10 14 L18 5.6"/></g></svg>
<div style="position:absolute;left:2114px;top:1484px;width:2px;height:50px;background:#45474c;border-radius:0px;"></div>
<svg style="position:absolute;left:2139px;top:1484px;" width="44" height="42" viewBox="0 0 44 42" fill="none" stroke-linecap="round" stroke-linejoin="round"><g stroke="#ced0d6" stroke-width="2.4" fill="none" stroke-linecap="round" stroke-linejoin="round"><path d="M22 9 H7 Q3 9 3 13 V33 Q3 37 7 37 H28 Q32 37 32 33 V22 M32 3 V17 M25 10 H39"/></g></svg>
<svg style="position:absolute;left:2613px;top:1490px;" width="46" height="38" viewBox="0 0 46 38" fill="none" stroke-linecap="round" stroke-linejoin="round"><g stroke="#ced0d6" stroke-width="2.4" fill="none" stroke-linecap="round" stroke-linejoin="round"><path d="M9 20 A14.5 14.5 0 0 1 33.8 9.7 M38 20 A14.5 14.5 0 0 1 13.2 30.3"/><path d="M4 15.5 L9 20.5 L14 15.5 M33 24.5 L38 19.5 L43 24.5"/></g></svg>
<svg style="position:absolute;left:2685px;top:1488px;" width="38" height="40" viewBox="0 0 38 40" fill="none" stroke-linecap="round" stroke-linejoin="round"><g stroke="#ced0d6" stroke-width="2.4" fill="none" stroke-linecap="round" stroke-linejoin="round"><circle cx="9" cy="29" r="6"/><circle cx="27" cy="29" r="6"/><path d="M9 23 Q12 8 25 4 Q22 12 27 23"/></g></svg>
<svg style="position:absolute;left:2750px;top:1492px;" width="48" height="40" viewBox="0 0 48 40" fill="none" stroke-linecap="round" stroke-linejoin="round"><g stroke="#ced0d6" stroke-width="2.4" fill="none" stroke-linecap="round" stroke-linejoin="round"><path d="M2 16 Q21 -4 40 16 Q21 36 2 16 Z"/><circle cx="21" cy="16" r="6"/></g><path d="M44 27 V37 H34 Z" fill="#ced0d6"/></svg>
<svg style="position:absolute;left:2821px;top:1489px;" width="38" height="38" viewBox="0 0 20 20" fill="none" stroke-linecap="round" stroke-linejoin="round"><g stroke="#ced0d6" stroke-width="1.25"><circle cx="8.5" cy="8.5" r="5.5"/><path d="M12.5 12.5 L17 17"/></g></svg>
<div style="position:absolute;left:890px;top:1554px;width:2007px;height:543px;background:#1e2230;border-radius:0px;"></div>
<div style="position:absolute;left:900px;top:1794px;width:1985px;height:60px;background:#43454a;border-radius:10px;"></div>
<div style="position:absolute;left:929px;top:1585px;width:5px;height:512px;background:#6f6a9a;border-radius:0px;"></div>
<div style="position:absolute;left:921px;top:1575px;width:20px;height:20px;background:#716b9c;border-radius:10px;"></div>
<div class="t" style="left:990px;top:1567.05px;font-size:34.2px;color:#dfe1e5;font-weight:400;font-family:'Liberation Sans', sans-serif;">fix shader_material_glsl example (#9513)</div>
<div class="t" style="left:1986px;top:1566.88px;font-size:34.4px;color:#dfe1e5;font-weight:400;font-family:'Liberation Sans', sans-serif;">François*</div>
<div class="t" style="left:2471px;top:1566.97px;font-size:34.3px;color:#dfe1e5;font-weight:400;font-family:'Liberation Sans', sans-serif;">Today 10:58</div>
<div style="position:absolute;left:921px;top:1635px;width:20px;height:20px;background:#716b9c;border-radius:10px;"></div>
<div class="t" style="left:990px;top:1627.05px;font-size:34.2px;color:#dfe1e5;font-weight:400;font-family:'Liberation Sans', sans-serif;">fix wireframe after MeshUniform size reduction (#9505)</div>
<div class="t" style="left:1986px;top:1626.88px;font-size:34.4px;color:#dfe1e5;font-weight:400;font-family:'Liberation Sans', sans-serif;">François*</div>
<div class="t" style="left:2471px;top:1626.97px;font-size:34.3px;color:#dfe1e5;font-weight:400;font-family:'Liberation Sans', sans-serif;">Today 10:53</div>
<div style="position:absolute;left:921px;top:1695px;width:20px;height:20px;background:#716b9c;border-radius:10px;"></div>
<div class="t" style="left:990px;top:1687.05px;font-size:34.2px;color:#dfe1e5;font-weight:400;font-family:'Liberation Sans', sans-serif;">Remove unnecessary doc string (#9481)</div>
<div class="t" style="left:1986px;top:1686.88px;font-size:34.4px;color:#dfe1e5;font-weight:400;font-family:'Liberation Sans', sans-serif;">Ielo*</div>
<div class="t" style="left:2471px;top:1686.97px;font-size:34.3px;color:#dfe1e5;font-weight:400;font-family:'Liberation Sans', sans-serif;">Today 04:39</div>
<div style="position:absolute;left:921px;top:1755px;width:20px;height:20px;background:#716b9c;border-radius:10px;"></div>
<div class="t" style="left:990px;top:1747.05px;font-size:34.2px;color:#dfe1e5;font-weight:400;font-family:'Liberation Sans', sans-serif;">Remove the bevy_dylib feature (#9516)</div>
<div class="t" style="left:1986px;top:1746.88px;font-size:34.4px;color:#dfe1e5;font-weight:400;font-family:'Liberation Sans', sans-serif;">Paul Hansen*</div>
<div class="t" style="left:2471px;top:1746.97px;font-size:34.3px;color:#dfe1e5;font-weight:400;font-family:'Liberation Sans', sans-serif;">Today 04:38</div>
<div style="position:absolute;left:921px;top:1815px;width:20px;height:20px;background:#716b9c;border-radius:10px;"></div>
<div class="t" style="left:990px;top:1807.05px;font-size:34.2px;color:#dfe1e5;font-weight:400;font-family:'Liberation Sans', sans-serif;">User controlled window visibility (#9355)</div>
<div class="t" style="left:1986px;top:1806.88px;font-size:34.4px;color:#dfe1e5;font-weight:400;font-family:'Liberation Sans', sans-serif;">IceSentry*</div>
<div class="t" style="left:2471px;top:1806.97px;font-size:34.3px;color:#dfe1e5;font-weight:400;font-family:'Liberation Sans', sans-serif;">Today 01:42</div>
<div style="position:absolute;left:921px;top:1875px;width:20px;height:20px;background:#716b9c;border-radius:10px;"></div>
<div class="t" style="left:990px;top:1867.05px;font-size:34.2px;color:#dfe1e5;font-weight:400;font-family:'Liberation Sans', sans-serif;">Remove Resource and add Debug to TaskPoolOptions (#9485)</div>
<div class="t" style="left:1986px;top:1866.88px;font-size:34.4px;color:#dfe1e5;font-weight:400;font-family:'Liberation Sans', sans-serif;">Pixelstorm*</div>
<div class="t" style="left:2471px;top:1866.97px;font-size:34.3px;color:#dfe1e5;font-weight:400;font-family:'Liberation Sans', sans-serif;">Today 01:32</div>
<div style="position:absolute;left:921px;top:1935px;width:20px;height:20px;background:#716b9c;border-radius:10px;"></div>
<div class="t" style="left:990px;top:1927.05px;font-size:34.2px;color:#dfe1e5;font-weight:400;font-family:'Liberation Sans', sans-serif;">Implement `Debug` for `UnsafeWorldCell` (#9460)</div>
<div class="t" style="left:1986px;top:1926.88px;font-size:34.4px;color:#dfe1e5;font-weight:400;font-family:'Liberation Sans', sans-serif;">Joseph*</div>
<div class="t" style="left:2471px;top:1926.97px;font-size:34.3px;color:#dfe1e5;font-weight:400;font-family:'Liberation Sans', sans-serif;">Today 01:00</div>
<div style="position:absolute;left:921px;top:1995px;width:20px;height:20px;background:#716b9c;border-radius:10px;"></div>
<div class="t" style="left:990px;top:1987.05px;font-size:34.2px;color:#dfe1e5;font-weight:400;font-family:'Liberation Sans', sans-serif;">Add `GamepadButtonInput` event (#9008)</div>
<div class="t" style="left:1986px;top:1986.88px;font-size:34.4px;color:#dfe1e5;font-weight:400;font-family:'Liberation Sans', sans-serif;">Joshua Walton*</div>
<div class="t" style="left:2471px;top:1986.97px;font-size:34.3px;color:#dfe1e5;font-weight:400;font-family:'Liberation Sans', sans-serif;">Yesterday 23:31</div>
<div style="position:absolute;left:921px;top:2055px;width:20px;height:20px;background:#716b9c;border-radius:10px;"></div>
<div class="t" style="left:990px;top:2047.05px;font-size:34.2px;color:#dfe1e5;font-weight:400;font-family:'Liberation Sans', sans-serif;">Fix point light radius (#9493)</div>
<div class="t" style="left:1986px;top:2046.88px;font-size:34.4px;color:#dfe1e5;font-weight:400;font-family:'Liberation Sans', sans-serif;">Ada Hieta*</div>
<div class="t" style="left:2471px;top:2046.97px;font-size:34.3px;color:#dfe1e5;font-weight:400;font-family:'Liberation Sans', sans-serif;">Yesterday 09:24</div>
<svg style="position:absolute;left:1722px;top:1566px;" width="60" height="36" viewBox="0 0 60 36" fill="none" stroke-linecap="round" stroke-linejoin="round"><g fill="none" stroke-width="2.2" stroke-linejoin="round"><path d="M18 3 L4 17 L18 31" stroke="#9b7fe0"/><path d="M30 3 L16 17 L30 31" stroke="#6aad6a"/><path d="M40 3 H54 V17 L40 31 L28 19 Z" stroke="#f2c55c"/><circle cx="47" cy="10" r="2" stroke="#f2c55c"/></g></svg>
<div class="t" style="left:1786px;top:1569.76px;font-size:31px;color:#8a8d94;font-weight:400;font-family:'Liberation Sans', sans-serif;">origin &amp; main</div>
<div style="position:absolute;left:2897px;top:1465px;width:2px;height:632px;background:#1d1e22;border-radius:0px;"></div>
<svg style="position:absolute;left:2932px;top:1488px;" width="44" height="42" viewBox="0 0 44 42" fill="none" stroke-linecap="round" stroke-linejoin="round"><g stroke="#ced0d6" stroke-width="2.4"><path d="M18 11 H40 M25.5 3.5 L18 11 L25.5 18.5"/><path d="M2 28 H24 M16.5 20.5 L24 28 L16.5 35.5"/></g></svg>
<svg style="position:absolute;left:3003px;top:1488px;" width="40" height="40" viewBox="0 0 40 40" fill="none" stroke-linecap="round" stroke-linejoin="round"><g stroke="#ced0d6" stroke-width="2.4" fill="none" stroke-linecap="round" stroke-linejoin="round"><path d="M12 4 L4 12 L12 20 M4 12 H25 Q35 12 35 23 Q35 34 25 34 H14"/></g></svg>
<svg style="position:absolute;left:3070px;top:1488px;" width="40" height="40" viewBox="0 0 40 40" fill="none" stroke-linecap="round" stroke-linejoin="round"><g stroke="#ced0d6" stroke-width="2.4" fill="none" stroke-linecap="round" stroke-linejoin="round"><circle cx="20" cy="20" r="16.5"/><path d="M18 10 V21 L25 26"/></g></svg>
<svg style="position:absolute;left:3136px;top:1492px;" width="48" height="40" viewBox="0 0 48 40" fill="none" stroke-linecap="round" stroke-linejoin="round"><g stroke="#ced0d6" stroke-width="2.4" fill="none" stroke-linecap="round" stroke-linejoin="round"><path d="M2 16 Q21 -4 40 16 Q21 36 2 16 Z"/><circle cx="21" cy="16" r="6"/></g><path d="M44 27 V37 H34 Z" fill="#ced0d6"/></svg>
<svg style="position:absolute;left:3621px;top:1490px;" width="28" height="38" viewBox="0 0 28 38" fill="none" stroke-linecap="round" stroke-linejoin="round"><g stroke="#ced0d6" stroke-width="2.4" fill="none" stroke-linecap="round" stroke-linejoin="round"><path d="M3 13 L14 3 L25 13 M3 24 L14 34 L25 24"/></g></svg>
<svg style="position:absolute;left:3689px;top:1490px;" width="28" height="38" viewBox="0 0 28 38" fill="none" stroke-linecap="round" stroke-linejoin="round"><g stroke="#ced0d6" stroke-width="2.4" fill="none" stroke-linecap="round" stroke-linejoin="round"><path d="M3 3 L14 13 L25 3 M3 34 L14 24 L25 34"/></g></svg>
<div style="position:absolute;left:2899px;top:1551px;width:859px;height:2px;background:#1d1e22;border-radius:0px;"></div>
<div style="position:absolute;left:2928px;top:1838px;width:800px;height:55px;background:#2e436e;border-radius:12px;"></div>
<svg style="position:absolute;left:2930px;top:1574px;" width="26" height="26" viewBox="0 0 20 20" fill="none" stroke-linecap="round" stroke-linejoin="round"><g stroke="#ced0d6" stroke-width="1.6"><path d="M2 5.6 L10 14 L18 5.6"/></g></svg>
<svg style="position:absolute;left:2974px;top:1567px;" width="42" height="42" viewBox="0 0 20 20" fill="none" stroke-linecap="round" stroke-linejoin="round"><g stroke="#ced0d6" stroke-width="1.15"><path d="M2.5 5.2 Q2.5 3.5 4.2 3.5 H7.6 L9.4 5.3 H15.8 Q17.5 5.3 17.5 7 V14.8 Q17.5 16.5 15.8 16.5 H4.2 Q2.5 16.5 2.5 14.8 Z" fill="#43454a"/></g></svg>
<div class="t" style="left:3025px;top:1568.80px;font-size:34.5px;color:#dfe1e5;font-weight:400;font-family:'Liberation Sans', sans-serif;">bevy</div>
<div class="t" style="left:3115px;top:1568.80px;font-size:34.5px;color:#7c7f86;font-weight:400;font-family:'Liberation Sans', sans-serif;">4 files</div>
<svg style="position:absolute;left:2978px;top:1630px;" width="26" height="26" viewBox="0 0 20 20" fill="none" stroke-linecap="round" stroke-linejoin="round"><g stroke="#ced0d6" stroke-width="1.6"><path d="M2 5.6 L10 14 L18 5.6"/></g></svg>
<svg style="position:absolute;left:3022px;top:1623px;" width="42" height="42" viewBox="0 0 20 20" fill="none" stroke-linecap="round" stroke-linejoin="round"><g stroke="#ced0d6" stroke-width="1.15"><path d="M2.5 5.2 Q2.5 3.5 4.2 3.5 H7.6 L9.4 5.3 H15.8 Q17.5 5.3 17.5 7 V14.8 Q17.5 16.5 15.8 16.5 H4.2 Q2.5 16.5 2.5 14.8 Z" fill="#43454a"/></g></svg>
<div class="t" style="left:3073px;top:1624.80px;font-size:34.5px;color:#dfe1e5;font-weight:400;font-family:'Liberation Sans', sans-serif;">crates</div>
<div class="t" style="left:3184px;top:1624.80px;font-size:34.5px;color:#7c7f86;font-weight:400;font-family:'Liberation Sans', sans-serif;">3 files</div>
<svg style="position:absolute;left:3025px;top:1686px;" width="26" height="26" viewBox="0 0 20 20" fill="none" stroke-linecap="round" stroke-linejoin="round"><g stroke="#ced0d6" stroke-width="1.6"><path d="M2 5.6 L10 14 L18 5.6"/></g></svg>
<svg style="position:absolute;left:3070px;top:1679px;" width="42" height="42" viewBox="0 0 20 20" fill="none" stroke-linecap="round" stroke-linejoin="round"><g stroke="#ced0d6" stroke-width="1.15"><path d="M2.5 5.2 Q2.5 3.5 4.2 3.5 H7.6 L9.4 5.3 H15.8 Q17.5 5.3 17.5 7 V14.8 Q17.5 16.5 15.8 16.5 H4.2 Q2.5 16.5 2.5 14.8 Z" fill="#43454a"/></g></svg>
<div class="t" style="left:3121px;top:1680.80px;font-size:34.5px;color:#dfe1e5;font-weight:400;font-family:'Liberation Sans', sans-serif;">bevy_window/src</div>
<div class="t" style="left:3402px;top:1680.80px;font-size:34.5px;color:#7c7f86;font-weight:400;font-family:'Liberation Sans', sans-serif;">1 file</div>
<svg style="position:absolute;left:3122px;top:1736px;" width="36" height="36" viewBox="0 0 36 36" fill="none" stroke-linecap="round" stroke-linejoin="round"><circle cx="18" cy="18" r="16" stroke="#e0915a" stroke-width="2.6"/><path fill-rule="evenodd" d="M4 11 H24 Q30 11 30 15.8 Q30 19.2 26.5 20.3 L32 25.8 H22.5 L18.8 20.8 H16.5 V25.8 H4.5 V22.6 H9.5 V14.2 H4 Z M16.5 14.2 H23 Q24.6 14.2 24.6 15.7 V16 Q24.6 17.6 23 17.6 H16.5 Z" fill="#e0915a"/></svg>
<div class="t" style="left:3169px;top:1736.80px;font-size:34.5px;color:#7ea6d6;font-weight:400;font-family:'Liberation Sans', sans-serif;">window.rs</div>
<svg style="position:absolute;left:3025px;top:1798px;" width="26" height="26" viewBox="0 0 20 20" fill="none" stroke-linecap="round" stroke-linejoin="round"><g stroke="#ced0d6" stroke-width="1.6"><path d="M2 5.6 L10 14 L18 5.6"/></g></svg>
<svg style="position:absolute;left:3070px;top:1791px;" width="42" height="42" viewBox="0 0 20 20" fill="none" stroke-linecap="round" stroke-linejoin="round"><g stroke="#ced0d6" stroke-width="1.15"><path d="M2.5 5.2 Q2.5 3.5 4.2 3.5 H7.6 L9.4 5.3 H15.8 Q17.5 5.3 17.5 7 V14.8 Q17.5 16.5 15.8 16.5 H4.2 Q2.5 16.5 2.5 14.8 Z" fill="#43454a"/></g></svg>
<div class="t" style="left:3121px;top:1792.80px;font-size:34.5px;color:#dfe1e5;font-weight:400;font-family:'Liberation Sans', sans-serif;">bevy_winit/src</div>
<div class="t" style="left:3359px;top:1792.80px;font-size:34.5px;color:#7c7f86;font-weight:400;font-family:'Liberation Sans', sans-serif;">2 files</div>
<svg style="position:absolute;left:3122px;top:1848px;" width="36" height="36" viewBox="0 0 36 36" fill="none" stroke-linecap="round" stroke-linejoin="round"><circle cx="18" cy="18" r="16" stroke="#e0915a" stroke-width="2.6"/><path fill-rule="evenodd" d="M4 11 H24 Q30 11 30 15.8 Q30 19.2 26.5 20.3 L32 25.8 H22.5 L18.8 20.8 H16.5 V25.8 H4.5 V22.6 H9.5 V14.2 H4 Z M16.5 14.2 H23 Q24.6 14.2 24.6 15.7 V16 Q24.6 17.6 23 17.6 H16.5 Z" fill="#e0915a"/></svg>
<div class="t" style="left:3169px;top:1848.80px;font-size:34.5px;color:#dfe1e5;font-weight:400;font-family:'Liberation Sans', sans-serif;">system.rs</div>
<div style="position:absolute;left:3100px;top:1898px;width:60px;height:8px;overflow:hidden">
<svg style="position:absolute;left:22px;top:-6px;" width="36" height="36" viewBox="0 0 36 36" fill="none" stroke-linecap="round" stroke-linejoin="round"><circle cx="18" cy="18" r="15.5" stroke="#e0915a" stroke-width="3.2" fill="none"/></svg>
</div>
<div style="position:absolute;left:2899px;top:1906px;width:859px;height:2px;background:#1d1e22;border-radius:0px;"></div>
<div style="position:absolute;left:2899px;top:1908px;width:859px;height:189px;overflow:hidden">
<div class="t" style="left:36px;top:45.56px;font-size:31.9px;color:#dfe1e5;font-weight:700;font-family:'Liberation Mono', monospace;">User controlled window visibility</div>
<div class="t" style="left:36px;top:88.56px;font-size:31.9px;color:#dfe1e5;font-weight:700;font-family:'Liberation Mono', monospace;">(#9355)</div>
<div class="t" style="left:36px;top:174.56px;font-size:31.9px;color:#dfe1e5;font-weight:700;font-family:'Liberation Mono', monospace;"># Objective</div>
</div>
<div style="position:absolute;left:0px;top:2097px;width:3840px;height:63px;background:#2b2b30;border-radius:0px;"></div>
<div style="position:absolute;left:0px;top:2096px;width:3840px;height:2px;background:#1d1e22;border-radius:0px;"></div>
<div style="position:absolute;left:35px;top:2118px;width:16.0px;height:16.0px;border:2.5px solid #5a8cf0;background:transparent;border-radius:4px;"></div>
<div class="t" style="left:67px;top:2111.76px;font-size:31px;color:#a3a5ab;font-weight:400;font-family:'Liberation Sans', sans-serif;">bevy</div>
<div class="t" style="left:196px;top:2111.76px;font-size:31px;color:#a3a5ab;font-weight:400;font-family:'Liberation Sans', sans-serif;">crates</div>
<div class="t" style="left:345px;top:2111.76px;font-size:31px;color:#a3a5ab;font-weight:400;font-family:'Liberation Sans', sans-serif;">bevy_winit</div>
<div class="t" style="left:553px;top:2111.76px;font-size:31px;color:#a3a5ab;font-weight:400;font-family:'Liberation Sans', sans-serif;">src</div>
<svg style="position:absolute;left:153px;top:2114px;" width="26" height="26" viewBox="0 0 20 20" fill="none" stroke-linecap="round" stroke-linejoin="round"><g stroke="#a3a5ab" stroke-width="1.6"><path d="M6.5 3 L13.5 10 L6.5 17"/></g></svg>
<svg style="position:absolute;left:302px;top:2114px;" width="26" height="26" viewBox="0 0 20 20" fill="none" stroke-linecap="round" stroke-linejoin="round"><g stroke="#a3a5ab" stroke-width="1.6"><path d="M6.5 3 L13.5 10 L6.5 17"/></g></svg>
<svg style="position:absolute;left:509px;top:2114px;" width="26" height="26" viewBox="0 0 20 20" fill="none" stroke-linecap="round" stroke-linejoin="round"><g stroke="#a3a5ab" stroke-width="1.6"><path d="M6.5 3 L13.5 10 L6.5 17"/></g></svg>
<svg style="position:absolute;left:613px;top:2114px;" width="26" height="26" viewBox="0 0 20 20" fill="none" stroke-linecap="round" stroke-linejoin="round"><g stroke="#a3a5ab" stroke-width="1.6"><path d="M6.5 3 L13.5 10 L6.5 17"/></g></svg>
<svg style="position:absolute;left:658px;top:2110px;" width="36" height="36" viewBox="0 0 36 36" fill="none" stroke-linecap="round" stroke-linejoin="round"><circle cx="18" cy="18" r="16" stroke="#e0915a" stroke-width="2.6"/><path fill-rule="evenodd" d="M4 11 H24 Q30 11 30 15.8 Q30 19.2 26.5 20.3 L32 25.8 H22.5 L18.8 20.8 H16.5 V25.8 H4.5 V22.6 H9.5 V14.2 H4 Z M16.5 14.2 H23 Q24.6 14.2 24.6 15.7 V16 Q24.6 17.6 23 17.6 H16.5 Z" fill="#e0915a"/></svg>
<div class="t" style="left:707px;top:2111.76px;font-size:31px;color:#a3a5ab;font-weight:400;font-family:'Liberation Sans', sans-serif;">system.rs</div>
<svg style="position:absolute;left:3567px;top:2110px;" width="34" height="34" viewBox="0 0 36 36" fill="none" stroke-linecap="round" stroke-linejoin="round"><path d="M35.00 18.00 L34.99 18.44 L34.96 18.89 L34.89 19.33 L34.75 19.76 L34.47 20.17 L33.84 20.51 L32.68 20.72 L31.18 20.80 L30.02 20.89 L29.39 21.05 L29.08 21.28 L28.90 21.54 L28.77 21.81 L28.65 22.09 L28.53 22.36 L28.42 22.64 L28.31 22.92 L28.21 23.20 L28.15 23.51 L28.21 23.90 L28.54 24.46 L29.30 25.34 L30.30 26.45 L30.98 27.43 L31.18 28.11 L31.09 28.60 L30.88 29.00 L30.62 29.36 L30.33 29.70 L30.02 30.02 L29.70 30.33 L29.36 30.62 L29.00 30.88 L28.60 31.09 L28.11 31.18 L27.43 30.98 L26.45 30.30 L25.34 29.30 L24.46 28.54 L23.90 28.21 L23.51 28.15 L23.20 28.21 L22.92 28.31 L22.64 28.42 L22.36 28.53 L22.09 28.65 L21.81 28.77 L21.54 28.90 L21.28 29.08 L21.05 29.39 L20.89 30.02 L20.80 31.18 L20.72 32.68 L20.51 33.84 L20.17 34.47 L19.76 34.75 L19.33 34.89 L18.89 34.96 L18.44 34.99 L18.00 35.00 L17.56 34.99 L17.11 34.96 L16.67 34.89 L16.24 34.75 L15.83 34.47 L15.49 33.84 L15.28 32.68 L15.20 31.18 L15.11 30.02 L14.95 29.39 L14.72 29.08 L14.46 28.90 L14.19 28.77 L13.91 28.65 L13.64 28.53 L13.36 28.42 L13.08 28.31 L12.80 28.21 L12.49 28.15 L12.10 28.21 L11.54 28.54 L10.66 29.30 L9.55 30.30 L8.57 30.98 L7.89 31.18 L7.40 31.09 L7.00 30.88 L6.64 30.62 L6.30 30.33 L5.98 30.02 L5.67 29.70 L5.38 29.36 L5.12 29.00 L4.91 28.60 L4.82 28.11 L5.02 27.43 L5.70 26.45 L6.70 25.34 L7.46 24.46 L7.79 23.90 L7.85 23.51 L7.79 23.20 L7.69 22.92 L7.58 22.64 L7.47 22.36 L7.35 22.09 L7.23 21.81 L7.10 21.54 L6.92 21.28 L6.61 21.05 L5.98 20.89 L4.82 20.80 L3.32 20.72 L2.16 20.51 L1.53 20.17 L1.25 19.76 L1.11 19.33 L1.04 18.89 L1.01 18.44 L1.00 18.00 L1.01 17.56 L1.04 17.11 L1.11 16.67 L1.25 16.24 L1.53 15.83 L2.16 15.49 L3.32 15.28 L4.82 15.20 L5.98 15.11 L6.61 14.95 L6.92 14.72 L7.10 14.46 L7.23 14.19 L7.35 13.91 L7.47 13.64 L7.58 13.36 L7.69 13.08 L7.79 12.80 L7.85 12.49 L7.79 12.10 L7.46 11.54 L6.70 10.66 L5.70 9.55 L5.02 8.57 L4.82 7.89 L4.91 7.40 L5.12 7.00 L5.38 6.64 L5.67 6.30 L5.98 5.98 L6.30 5.67 L6.64 5.38 L7.00 5.12 L7.40 4.91 L7.89 4.82 L8.57 5.02 L9.55 5.70 L10.66 6.70 L11.54 7.46 L12.10 7.79 L12.49 7.85 L12.80 7.79 L13.08 7.69 L13.36 7.58 L13.64 7.47 L13.91 7.35 L14.19 7.23 L14.46 7.10 L14.72 6.92 L14.95 6.61 L15.11 5.98 L15.20 4.82 L15.28 3.32 L15.49 2.16 L15.83 1.53 L16.24 1.25 L16.67 1.11 L17.11 1.04 L17.56 1.01 L18.00 1.00 L18.44 1.01 L18.89 1.04 L19.33 1.11 L19.76 1.25 L20.17 1.53 L20.51 2.16 L20.72 3.32 L20.80 4.82 L20.89 5.98 L21.05 6.61 L21.28 6.92 L21.54 7.10 L21.81 7.23 L22.09 7.35 L22.36 7.47 L22.64 7.58 L22.92 7.69 L23.20 7.79 L23.51 7.85 L23.90 7.79 L24.46 7.46 L25.34 6.70 L26.45 5.70 L27.43 5.02 L28.11 4.82 L28.60 4.91 L29.00 5.12 L29.36 5.38 L29.70 5.67 L30.02 5.98 L30.33 6.30 L30.62 6.64 L30.88 7.00 L31.09 7.40 L31.18 7.89 L30.98 8.57 L30.30 9.55 L29.30 10.66 L28.54 11.54 L28.21 12.10 L28.15 12.49 L28.21 12.80 L28.31 13.08 L28.42 13.36 L28.53 13.64 L28.65 13.91 L28.77 14.19 L28.90 14.46 L29.08 14.72 L29.39 14.95 L30.02 15.11 L31.18 15.20 L32.68 15.28 L33.84 15.49 L34.47 15.83 L34.75 16.24 L34.89 16.67 L34.96 17.11 L34.99 17.56 Z" fill="#a3a5ab"/><circle cx="18" cy="18" r="5.5" fill="#2b2b30"/></svg>
<div class="t" style="left:3609px;top:2112.18px;font-size:30.5px;color:#a3a5ab;font-weight:400;font-family:'Liberation Sans', sans-serif;">Cargo Check</div>
</body></html>
